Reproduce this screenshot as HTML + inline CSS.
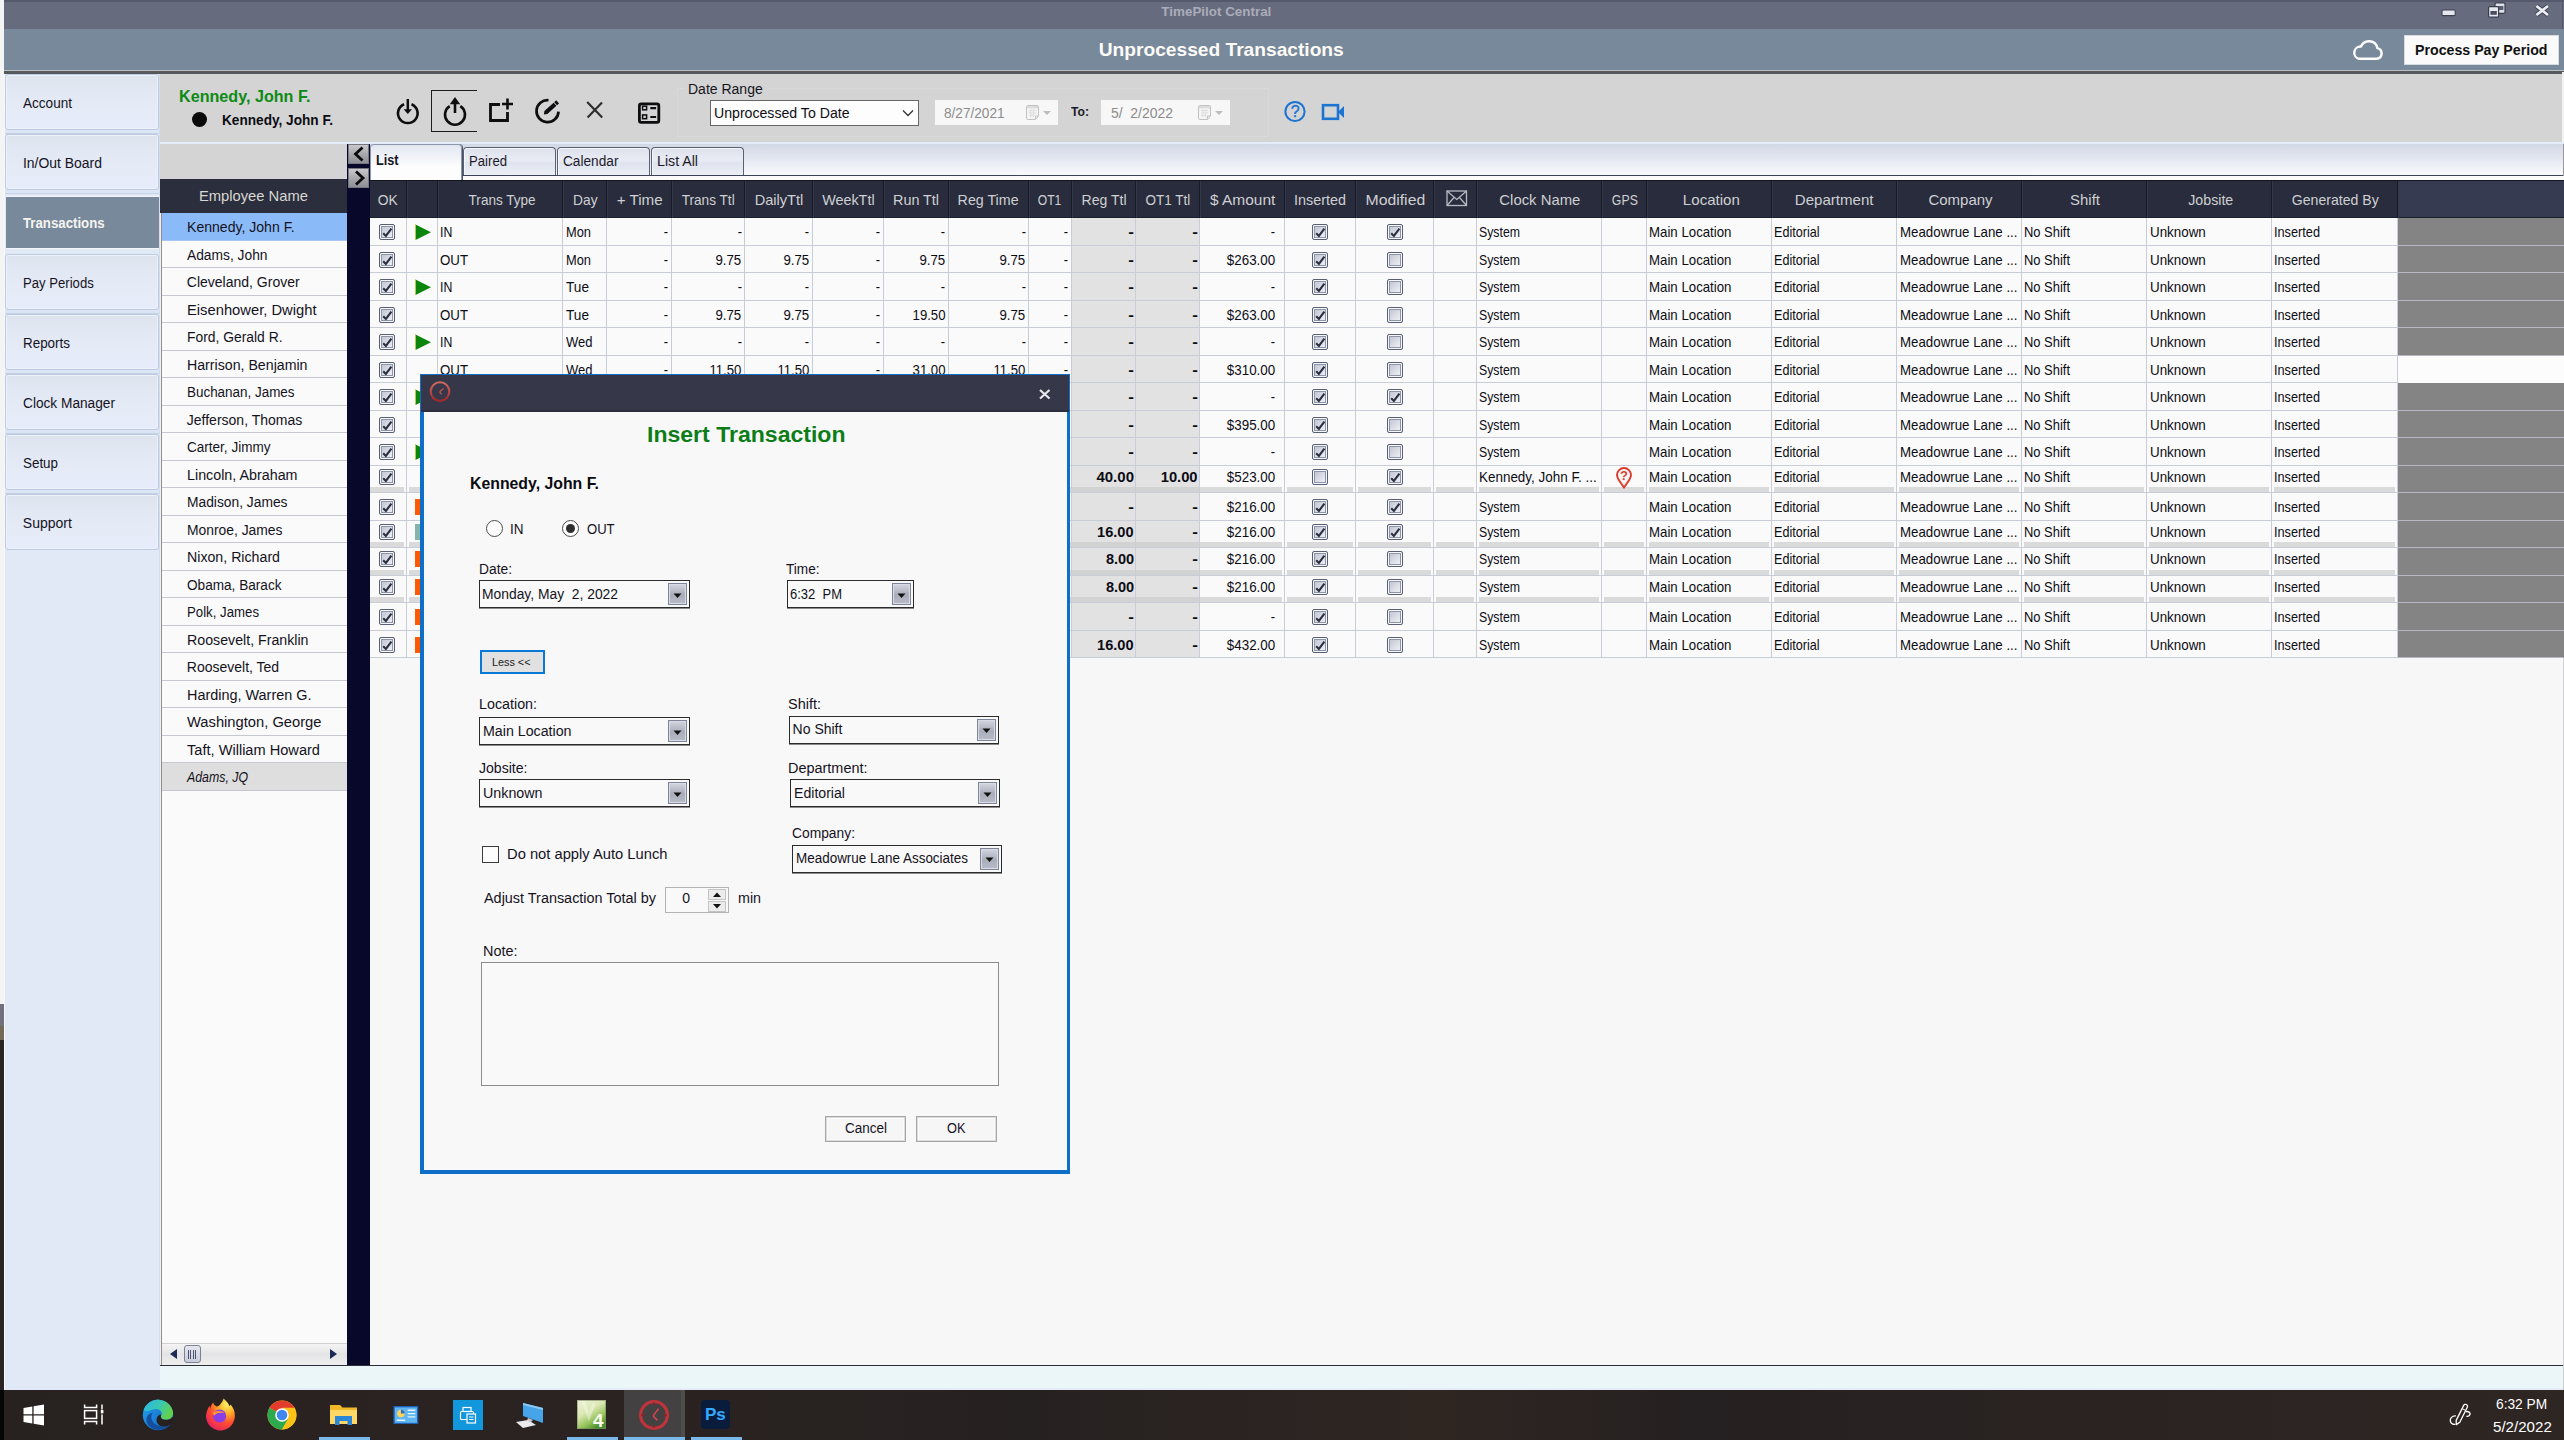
<!DOCTYPE html>
<html lang="en"><head><meta charset="utf-8"><title>TimePilot Central</title>
<style>
html,body{margin:0;padding:0;}
body{width:2564px;height:1440px;position:relative;overflow:hidden;background:#f7f7f7;
font-family:"Liberation Sans",sans-serif;}
.a{position:absolute;}
.t{position:absolute;white-space:nowrap;line-height:20px;height:20px;}
.t>span{display:inline-block;}
</style></head>
<body>
<section class="desktop-bg">
<div class="a" style="left:0px;top:0px;width:2564px;height:1440px;background:#f7f7f7;"></div>
<div class="a" style="left:0px;top:0px;width:4px;height:1004px;background:#f4f4f4;"></div>
<div class="a" style="left:0px;top:1004px;width:4px;height:22px;background:#70717f;"></div>
<div class="a" style="left:0px;top:1026px;width:4px;height:14px;background:#736a56;"></div>
<div class="a" style="left:0px;top:1040px;width:4px;height:350px;background:#2c2423;"></div>
<div class="a" style="left:4px;top:0px;width:1px;height:1390px;background:#f6f8fb;"></div>
</section><header class="window-titlebar">
<div class="a" style="left:4px;top:0px;width:2560px;height:29px;background:#676b7e;"></div>
<div class="a" style="left:4px;top:0px;width:2560px;height:1.5px;background:#56586c;"></div>
<div class="t" style="left:1163.16px;top:1.5px;font-size:13px;color:#aaadb9;font-weight:700;"><span style="transform:scaleX(1.0310);transform-origin:50% 50%;">TimePilot Central</span></div>
<svg class="a" style="left:2440px;top:8px;" width="18" height="10" viewBox="0 0 18 10"><rect x="2" y="2" width="13.2" height="5.6" rx="1.2" fill="#e6e7ee" stroke="#3e4052" stroke-width="1.1"/></svg>
<svg class="a" style="left:2486px;top:1px;" width="22" height="18" viewBox="0 0 22 18"><rect x="9" y="1.8" width="10" height="10.6" rx="1.2" fill="#dfe0e8" stroke="#3a3c4e" stroke-width="1.2"/><rect x="11" y="5" width="6.4" height="4" fill="#5a5c70"/><rect x="2.6" y="5.6" width="10" height="10.6" rx="1.2" fill="#e6e7ee" stroke="#3a3c4e" stroke-width="1.2"/><rect x="4.4" y="10" width="6.4" height="3.8" fill="#4a4c60"/></svg>
<svg class="a" style="left:2533px;top:3px;" width="19" height="15" viewBox="0 0 19 15"><path d="M3.4 3 L15 12 M15 3 L3.4 12" stroke="#3e4052" stroke-width="4.6" stroke-linecap="butt"/><path d="M3.4 3 L15 12 M15 3 L3.4 12" stroke="#ecedf2" stroke-width="2.8" stroke-linecap="butt"/></svg>
<div class="a" style="left:2562px;top:0px;width:1px;height:29px;background:#55576a;"></div>
</header><header class="page-header">
<div class="a" style="left:4px;top:29px;width:2560px;height:42px;background:#78899c;"></div>
<div class="t" style="left:1103.06px;top:39.59px;font-size:18.5px;color:#fdfbf6;font-weight:700;"><span style="transform:scaleX(1.0360);transform-origin:50% 50%;">Unprocessed Transactions</span></div>
<div class="a" style="left:4px;top:70px;width:2560px;height:1px;background:#b9c0c4;"></div>
<div class="a" style="left:4px;top:71px;width:2560px;height:3px;background:#55585c;"></div>
<svg class="a" style="left:2350px;top:37px;" width="36" height="26" viewBox="0 0 36 26"><path d="M9 21.8 H27 A5.4 5.4 0 0 0 27.4 11.2 A8.6 8.6 0 0 0 11 9.6 A6.2 6.2 0 0 0 9 21.8 Z" fill="none" stroke="#fff" stroke-width="2.4" stroke-linejoin="round"/></svg>
<div class="a" style="left:2404px;top:35px;width:155px;height:30px;background:#fafafa;border:1px solid #d9dcdf;box-sizing:border-box;"></div>
<div class="t" style="left:2414.6px;top:39.58px;font-size:14.5px;color:#111;font-weight:700;"><span style="transform:scaleX(0.9784);transform-origin:0 50%;">Process Pay Period</span></div>
</header><nav class="sidebar">
<div class="a" style="left:5px;top:74px;width:155px;height:1316px;background:#e0e9f5;"></div>
<div class="a" style="left:5px;top:74px;width:154px;height:56px;box-sizing:border-box;border:1px solid #bccbe2;border-radius:3px;background:linear-gradient(#dde4ee 0%,#e3e9f4 35%,#e6ecf9 100%);box-shadow:inset 0 0 0 1px #edf1fa;"></div>
<div class="a" style="left:5px;top:130px;width:154px;height:4px;background:#dbe5f4;border-bottom:1px solid #c4d2e6;box-sizing:border-box;"></div>
<div class="t" style="left:22.8px;top:92.65px;font-size:14px;color:#15121e;"><span style="transform:scaleX(0.9685);transform-origin:0 50%;">Account</span></div>
<div class="a" style="left:5px;top:134px;width:154px;height:56px;box-sizing:border-box;border:1px solid #bccbe2;border-radius:3px;background:linear-gradient(#dde4ee 0%,#e3e9f4 35%,#e6ecf9 100%);box-shadow:inset 0 0 0 1px #edf1fa;"></div>
<div class="a" style="left:5px;top:190px;width:154px;height:4px;background:#dbe5f4;border-bottom:1px solid #c4d2e6;box-sizing:border-box;"></div>
<div class="t" style="left:22.8px;top:152.65px;font-size:14px;color:#15121e;"><span style="transform:scaleX(0.9951);transform-origin:0 50%;">In/Out Board</span></div>
<div class="a" style="left:6px;top:196px;width:154px;height:51px;background:#78899c;border-top:1px solid #f4f6fb;border-bottom:1px solid #f4f6fb;"></div>
<div class="t" style="left:22.6px;top:212.55px;font-size:14px;color:#f6f4f0;font-weight:700;"><span style="transform:scaleX(0.9447);transform-origin:0 50%;">Transactions</span></div>
<div class="a" style="left:5px;top:254px;width:154px;height:56px;box-sizing:border-box;border:1px solid #bccbe2;border-radius:3px;background:linear-gradient(#dde4ee 0%,#e3e9f4 35%,#e6ecf9 100%);box-shadow:inset 0 0 0 1px #edf1fa;"></div>
<div class="a" style="left:5px;top:310px;width:154px;height:4px;background:#dbe5f4;border-bottom:1px solid #c4d2e6;box-sizing:border-box;"></div>
<div class="t" style="left:22.8px;top:272.65px;font-size:14px;color:#15121e;"><span style="transform:scaleX(0.9379);transform-origin:0 50%;">Pay Periods</span></div>
<div class="a" style="left:5px;top:314px;width:154px;height:56px;box-sizing:border-box;border:1px solid #bccbe2;border-radius:3px;background:linear-gradient(#dde4ee 0%,#e3e9f4 35%,#e6ecf9 100%);box-shadow:inset 0 0 0 1px #edf1fa;"></div>
<div class="a" style="left:5px;top:370px;width:154px;height:4px;background:#dbe5f4;border-bottom:1px solid #c4d2e6;box-sizing:border-box;"></div>
<div class="t" style="left:22.8px;top:332.65px;font-size:14px;color:#15121e;"><span style="transform:scaleX(0.9586);transform-origin:0 50%;">Reports</span></div>
<div class="a" style="left:5px;top:374px;width:154px;height:56px;box-sizing:border-box;border:1px solid #bccbe2;border-radius:3px;background:linear-gradient(#dde4ee 0%,#e3e9f4 35%,#e6ecf9 100%);box-shadow:inset 0 0 0 1px #edf1fa;"></div>
<div class="a" style="left:5px;top:430px;width:154px;height:4px;background:#dbe5f4;border-bottom:1px solid #c4d2e6;box-sizing:border-box;"></div>
<div class="t" style="left:22.8px;top:392.65px;font-size:14px;color:#15121e;"><span style="transform:scaleX(0.9771);transform-origin:0 50%;">Clock Manager</span></div>
<div class="a" style="left:5px;top:434px;width:154px;height:56px;box-sizing:border-box;border:1px solid #bccbe2;border-radius:3px;background:linear-gradient(#dde4ee 0%,#e3e9f4 35%,#e6ecf9 100%);box-shadow:inset 0 0 0 1px #edf1fa;"></div>
<div class="a" style="left:5px;top:490px;width:154px;height:4px;background:#dbe5f4;border-bottom:1px solid #c4d2e6;box-sizing:border-box;"></div>
<div class="t" style="left:22.8px;top:452.65px;font-size:14px;color:#15121e;"><span style="transform:scaleX(0.9564);transform-origin:0 50%;">Setup</span></div>
<div class="a" style="left:5px;top:494px;width:154px;height:56px;box-sizing:border-box;border:1px solid #bccbe2;border-radius:3px;background:linear-gradient(#dde4ee 0%,#e3e9f4 35%,#e6ecf9 100%);box-shadow:inset 0 0 0 1px #edf1fa;"></div>
<div class="t" style="left:22.8px;top:512.65px;font-size:14px;color:#15121e;"><span>Support</span></div>
<div class="a" style="left:159px;top:74px;width:1px;height:1316px;background:#d5ddea;"></div>
</nav>
<section class="toolbar">
<div class="a" style="left:160px;top:74px;width:2402px;height:68px;background:#d4d4d4;"></div>
<div class="a" style="left:2562px;top:72px;width:2px;height:72px;background:#f3f3f3;"></div>
<div class="t" style="left:179.3px;top:85.58px;font-size:16.5px;color:#0c8a14;font-weight:700;"><span style="transform:scaleX(0.9779);transform-origin:0 50%;">Kennedy, John F.</span></div>
<div class="a" style="left:192px;top:112px;width:15px;height:15px;background:#0a0a0a;border-radius:50%;"></div>
<div class="t" style="left:221.5px;top:110.45px;font-size:14px;color:#0b0b12;font-weight:700;"><span style="transform:scaleX(0.9729);transform-origin:0 50%;">Kennedy, John F.</span></div>
<svg class="a" style="left:394px;top:97px;" width="28" height="30" viewBox="0 0 28 30"><path d="M10.1 7.2 A9.8 9.8 0 1 0 17.5 7.2" fill="none" stroke="#0e0e10" stroke-width="2.6"/><path d="M13.8 2 V13" stroke="#0e0e10" stroke-width="2.5"/><path d="M9.6 12.2 H18 L13.8 17 Z" fill="#0e0e10"/></svg>
<div class="a" style="left:431px;top:90px;width:46px;height:42px;border:1px solid #1d1d1d;border-right:none;box-sizing:border-box;"></div>
<svg class="a" style="left:441px;top:95px;" width="28" height="32" viewBox="0 0 28 32"><path d="M8.7 11.2 A10 10 0 1 0 19.3 11.2" fill="none" stroke="#0e0e10" stroke-width="2.6"/><path d="M14 7 V18" stroke="#0e0e10" stroke-width="2.6"/><path d="M8.8 9.3 H19.2 L14 2 Z" fill="#0e0e10"/></svg>
<svg class="a" style="left:487px;top:96px;" width="28" height="28" viewBox="0 0 28 28"><path d="M13 8.5 H3.5 V24.5 H20.5 V16" fill="none" stroke="#0e0e10" stroke-width="2.8"/><path d="M20.5 2.5 V13.5 M15 8 H26" stroke="#0e0e10" stroke-width="2.6"/></svg>
<svg class="a" style="left:533px;top:96px;" width="30" height="30" viewBox="0 0 30 30"><path d="M15.5 4.25 A11 11 0 1 0 25.5 15.6" fill="none" stroke="#0e0e10" stroke-width="2.7"/><path d="M10.9 18.6 L11.4 14.9 L20.62 6.67 L23.45 9.77 L14.4 18.1 Z" fill="#0e0e10"/><path d="M21.21 6.14 L23.21 4.31 L26.04 7.42 L24.04 9.24 Z" fill="#0e0e10"/></svg>
<svg class="a" style="left:585px;top:100px;" width="20" height="20" viewBox="0 0 20 20"><path d="M2.2 2 L17.2 17.6 M17 2.6 L2.6 17.4" stroke="#2c2c2c" stroke-width="2.1"/></svg>
<svg class="a" style="left:636px;top:100px;" width="26" height="26" viewBox="0 0 26 26"><rect x="3.4" y="3.9" width="19.4" height="18.5" rx="1.8" fill="none" stroke="#0e0e10" stroke-width="2.8"/><rect x="6.6" y="6.2" width="4" height="3.6" fill="none" stroke="#0e0e10" stroke-width="1.5"/><rect x="6.6" y="14.9" width="4" height="3.8" fill="none" stroke="#0e0e10" stroke-width="1.5"/><path d="M14.3 8.2 H20.1 M14.3 17 H20.1" stroke="#0e0e10" stroke-width="2.2"/></svg>
<div class="a" style="left:677px;top:88px;width:592px;height:49px;border:1px solid #d9d9d9;box-sizing:border-box;"></div>
<div class="a" style="left:685px;top:82px;width:82px;height:14px;background:#d4d4d4;"></div>
<div class="t" style="left:688px;top:79.35px;font-size:14px;color:#15151c;"><span>Date Range</span></div>
<div class="a" style="left:710px;top:100px;width:209px;height:26px;background:#fdfdfd;border:1px solid #666;box-sizing:border-box;"></div>
<div class="t" style="left:714.2px;top:102.75px;font-size:14px;color:#0d0d14;"><span style="transform:scaleX(1.0084);transform-origin:0 50%;">Unprocessed To Date</span></div>
<svg class="a" style="left:901px;top:109px;" width="14" height="9" viewBox="0 0 14 9"><path d="M2 1.5 L7 6.5 L12 1.5" fill="none" stroke="#333" stroke-width="1.3"/></svg>
<div class="a" style="left:935px;top:100px;width:123px;height:25px;background:#f7f7f7;"></div>
<div class="t" style="left:944.4px;top:102.75px;font-size:14px;color:#8c8c8c;"><span style="transform:scaleX(0.9728);transform-origin:0 50%;">8/27/2021</span></div>
<svg class="a" style="left:1026px;top:105px;" width="13" height="15" viewBox="0 0 13 15"><path d="M0.5 1.5 Q0.5 0.5 1.5 0.5 H11.5 Q12.5 0.5 12.5 1.5 V11 L9.5 14.5 H1.5 Q0.5 14.5 0.5 13.5 Z" fill="#f4f4f4" stroke="#c2c2c2"/><path d="M1 1 H12 V3.4 H1 Z" fill="#dcdcdc"/><path d="M3 5.5 H10 M3 8 H10 M3 10.5 H8.5 M4.8 4.5 V12 M7.4 4.5 V12" stroke="#dedede" stroke-width="1"/><path d="M9.5 14.5 V11 H12.5" fill="none" stroke="#c2c2c2"/></svg>
<svg class="a" style="left:1041.5px;top:109.5px;" width="10" height="6" viewBox="0 0 10 6"><path d="M1 1 H9 L5 5 Z" fill="#bdbdbd"/></svg>
<div class="t" style="left:1070.5px;top:102.32px;font-size:13.5px;color:#1a1a22;font-weight:700;"><span style="transform:scaleX(0.9000);transform-origin:0 50%;">To:</span></div>
<div class="a" style="left:1101px;top:100px;width:129px;height:25px;background:#f7f7f7;"></div>
<div class="t" style="left:1110.6px;top:102.75px;font-size:14px;color:#8c8c8c;"><span style="transform:scaleX(0.9955);transform-origin:0 50%;">5/ &nbsp;2/2022</span></div>
<svg class="a" style="left:1198px;top:105px;" width="13" height="15" viewBox="0 0 13 15"><path d="M0.5 1.5 Q0.5 0.5 1.5 0.5 H11.5 Q12.5 0.5 12.5 1.5 V11 L9.5 14.5 H1.5 Q0.5 14.5 0.5 13.5 Z" fill="#f4f4f4" stroke="#c2c2c2"/><path d="M1 1 H12 V3.4 H1 Z" fill="#dcdcdc"/><path d="M3 5.5 H10 M3 8 H10 M3 10.5 H8.5 M4.8 4.5 V12 M7.4 4.5 V12" stroke="#dedede" stroke-width="1"/><path d="M9.5 14.5 V11 H12.5" fill="none" stroke="#c2c2c2"/></svg>
<svg class="a" style="left:1213.5px;top:109.5px;" width="10" height="6" viewBox="0 0 10 6"><path d="M1 1 H9 L5 5 Z" fill="#bdbdbd"/></svg>
<svg class="a" style="left:1283px;top:100px;" width="24" height="24" viewBox="0 0 24 24"><circle cx="12" cy="11.5" r="9.6" fill="none" stroke="#1b74d2" stroke-width="2"/></svg>
<div class="t" style="left:1290.75px;top:101.66px;font-size:16px;color:#1b74d2;-webkit-text-stroke:0.4px #1b74d2;"><span>?</span></div>
<svg class="a" style="left:1320px;top:102px;" width="26" height="20" viewBox="0 0 26 20"><rect x="3" y="3.2" width="15" height="13.6" fill="none" stroke="#1b74d2" stroke-width="2.6"/><path d="M18 10 L24 4 V16 Z" fill="#1b74d2"/></svg>
</section><section class="tabstrip">
<div class="a" style="left:160px;top:142px;width:2404px;height:2px;background:#e4ecf8;"></div>
<div class="a" style="left:160px;top:144px;width:188px;height:35px;background:#d4d4d4;"></div>
<div class="a" style="left:348px;top:144px;width:2215px;height:32px;background:linear-gradient(#d3d8e6 0%,#e1e5ef 40%,#f4f6fa 85%,#fbfbfc 100%);"></div>
<div class="a" style="left:348px;top:175px;width:2216px;height:1px;background:#3c4456;"></div>
<div class="a" style="left:2563px;top:144px;width:1px;height:32px;background:#9a9a9e;"></div>
<div class="a" style="left:370px;top:176px;width:2194px;height:5px;background:#fbfbfb;"></div>
<div class="a" style="left:370px;top:144px;width:92px;height:37px;box-sizing:border-box;border:1px solid #8d97ab;border-bottom:none;border-radius:4px 4px 0 0;background:linear-gradient(#e3e7f1 0%,#f1f3f8 35%,#fdfdfd 60%,#fdfdfd 100%);box-shadow:1px 0 0 #4a5263;"></div>
<div class="t" style="left:375.8px;top:150.35px;font-size:14px;color:#15151f;font-weight:700;"><span style="transform:scaleX(0.9040);transform-origin:0 50%;">List</span></div>
<div class="a" style="left:463px;top:147px;width:93px;height:28px;box-sizing:border-box;border:1px solid #596274;border-bottom:none;border-radius:4px 4px 0 0;background:linear-gradient(#dde1ec 0%,#e9ecf4 45%,#dfe3ee 55%,#eceff5 100%);box-shadow:inset 1px 1px 0 #f4f6fa;"></div>
<div class="t" style="left:469.4px;top:151.35px;font-size:14px;color:#1c1a2a;"><span style="transform:scaleX(0.9390);transform-origin:0 50%;">Paired</span></div>
<div class="a" style="left:557px;top:147px;width:93px;height:28px;box-sizing:border-box;border:1px solid #596274;border-bottom:none;border-radius:4px 4px 0 0;background:linear-gradient(#dde1ec 0%,#e9ecf4 45%,#dfe3ee 55%,#eceff5 100%);box-shadow:inset 1px 1px 0 #f4f6fa;"></div>
<div class="t" style="left:563.4px;top:151.35px;font-size:14px;color:#1c1a2a;"><span style="transform:scaleX(0.9766);transform-origin:0 50%;">Calendar</span></div>
<div class="a" style="left:651px;top:147px;width:93px;height:28px;box-sizing:border-box;border:1px solid #596274;border-bottom:none;border-radius:4px 4px 0 0;background:linear-gradient(#dde1ec 0%,#e9ecf4 45%,#dfe3ee 55%,#eceff5 100%);box-shadow:inset 1px 1px 0 #f4f6fa;"></div>
<div class="t" style="left:657.4px;top:151.35px;font-size:14px;color:#1c1a2a;"><span style="transform:scaleX(1.0131);transform-origin:0 50%;">List All</span></div>
</section><section class="splitter">
<div class="a" style="left:347px;top:144px;width:23px;height:1221px;background:#08082a;"></div>
<div class="a" style="left:348px;top:144px;width:21px;height:20px;background:linear-gradient(#c9c9cd,#a2a2a8 60%,#8e8e96);border:1px solid #77777f;box-sizing:border-box;"></div>
<svg class="a" style="left:348px;top:144px;" width="21" height="20" viewBox="0 0 21 20"><path d="M14.5 3.5 L7.5 10 L14.5 16.5" fill="none" stroke="#0a0a0a" stroke-width="2.8"/></svg>
<div class="a" style="left:348px;top:168px;width:21px;height:20px;background:linear-gradient(#c9c9cd,#a2a2a8 60%,#8e8e96);border:1px solid #77777f;box-sizing:border-box;"></div>
<svg class="a" style="left:348px;top:168px;" width="21" height="20" viewBox="0 0 21 20"><path d="M8 3.5 L15 10 L8 16.5" fill="none" stroke="#0a0a0a" stroke-width="2.8"/></svg>
</section><section class="employee-list">
<div class="a" style="left:160px;top:179px;width:187px;height:1186px;background:#fafafa;border-left:1px solid #f0f0f0;box-sizing:border-box;"></div>
<div class="a" style="left:161px;top:213px;width:1px;height:1152px;background:#8e8e90;"></div>
<div class="a" style="left:160px;top:179px;width:187px;height:34px;background:#2a2e3d;"></div>
<div class="t" style="left:197.95px;top:186.4px;font-size:15px;color:#d9d7d2;"><span style="transform:scaleX(0.9830);transform-origin:50% 50%;">Employee Name</span></div>
<div class="a" style="left:162px;top:213px;width:185px;height:27px;background:#8bbaf8;"></div>
<div class="a" style="left:162px;top:240px;width:185px;height:1px;background:#a9c6ee;"></div>
<div class="t" style="left:186.8px;top:216.75px;font-size:14px;color:#14121c;"><span style="transform:scaleX(1.0041);transform-origin:0 50%;">Kennedy, John F.</span></div>
<div class="a" style="left:162px;top:267px;width:185px;height:1px;background:#c6c8d0;"></div>
<div class="t" style="left:186.8px;top:244.75px;font-size:14px;color:#14121c;"><span style="transform:scaleX(0.9851);transform-origin:0 50%;">Adams, John</span></div>
<div class="a" style="left:162px;top:295px;width:185px;height:1px;background:#c6c8d0;"></div>
<div class="t" style="left:186.8px;top:271.75px;font-size:14px;color:#14121c;"><span>Cleveland, Grover</span></div>
<div class="a" style="left:162px;top:322px;width:185px;height:1px;background:#c6c8d0;"></div>
<div class="t" style="left:186.8px;top:299.75px;font-size:14px;color:#14121c;"><span style="transform:scaleX(1.0532);transform-origin:0 50%;">Eisenhower, Dwight</span></div>
<div class="a" style="left:162px;top:350px;width:185px;height:1px;background:#c6c8d0;"></div>
<div class="t" style="left:186.8px;top:326.75px;font-size:14px;color:#14121c;"><span style="transform:scaleX(0.9898);transform-origin:0 50%;">Ford, Gerald R.</span></div>
<div class="a" style="left:162px;top:377px;width:185px;height:1px;background:#c6c8d0;"></div>
<div class="t" style="left:186.8px;top:354.75px;font-size:14px;color:#14121c;"><span style="transform:scaleX(1.0121);transform-origin:0 50%;">Harrison, Benjamin</span></div>
<div class="a" style="left:162px;top:405px;width:185px;height:1px;background:#c6c8d0;"></div>
<div class="t" style="left:186.8px;top:381.75px;font-size:14px;color:#14121c;"><span style="transform:scaleX(0.9592);transform-origin:0 50%;">Buchanan, James</span></div>
<div class="a" style="left:162px;top:432px;width:185px;height:1px;background:#c6c8d0;"></div>
<div class="t" style="left:186.8px;top:409.75px;font-size:14px;color:#14121c;"><span>Jefferson, Thomas</span></div>
<div class="a" style="left:162px;top:460px;width:185px;height:1px;background:#c6c8d0;"></div>
<div class="t" style="left:186.8px;top:436.75px;font-size:14px;color:#14121c;"><span style="transform:scaleX(0.9671);transform-origin:0 50%;">Carter, Jimmy</span></div>
<div class="a" style="left:162px;top:487px;width:185px;height:1px;background:#c6c8d0;"></div>
<div class="t" style="left:186.8px;top:464.75px;font-size:14px;color:#14121c;"><span style="transform:scaleX(1.0214);transform-origin:0 50%;">Lincoln, Abraham</span></div>
<div class="a" style="left:162px;top:515px;width:185px;height:1px;background:#c6c8d0;"></div>
<div class="t" style="left:186.8px;top:491.75px;font-size:14px;color:#14121c;"><span style="transform:scaleX(0.9859);transform-origin:0 50%;">Madison, James</span></div>
<div class="a" style="left:162px;top:542px;width:185px;height:1px;background:#c6c8d0;"></div>
<div class="t" style="left:186.8px;top:519.75px;font-size:14px;color:#14121c;"><span style="transform:scaleX(0.9898);transform-origin:0 50%;">Monroe, James</span></div>
<div class="a" style="left:162px;top:570px;width:185px;height:1px;background:#c6c8d0;"></div>
<div class="t" style="left:186.8px;top:546.75px;font-size:14px;color:#14121c;"><span style="transform:scaleX(1.0128);transform-origin:0 50%;">Nixon, Richard</span></div>
<div class="a" style="left:162px;top:597px;width:185px;height:1px;background:#c6c8d0;"></div>
<div class="t" style="left:186.8px;top:574.75px;font-size:14px;color:#14121c;"><span style="transform:scaleX(0.9716);transform-origin:0 50%;">Obama, Barack</span></div>
<div class="a" style="left:162px;top:625px;width:185px;height:1px;background:#c6c8d0;"></div>
<div class="t" style="left:186.8px;top:601.75px;font-size:14px;color:#14121c;"><span style="transform:scaleX(0.9443);transform-origin:0 50%;">Polk, James</span></div>
<div class="a" style="left:162px;top:652px;width:185px;height:1px;background:#c6c8d0;"></div>
<div class="t" style="left:186.8px;top:629.75px;font-size:14px;color:#14121c;"><span style="transform:scaleX(1.0140);transform-origin:0 50%;">Roosevelt, Franklin</span></div>
<div class="a" style="left:162px;top:680px;width:185px;height:1px;background:#c6c8d0;"></div>
<div class="t" style="left:186.8px;top:656.75px;font-size:14px;color:#14121c;"><span>Roosevelt, Ted</span></div>
<div class="a" style="left:162px;top:707px;width:185px;height:1px;background:#c6c8d0;"></div>
<div class="t" style="left:186.8px;top:684.75px;font-size:14px;color:#14121c;"><span style="transform:scaleX(1.0301);transform-origin:0 50%;">Harding, Warren G.</span></div>
<div class="a" style="left:162px;top:735px;width:185px;height:1px;background:#c6c8d0;"></div>
<div class="t" style="left:186.8px;top:711.75px;font-size:14px;color:#14121c;"><span style="transform:scaleX(1.0517);transform-origin:0 50%;">Washington, George</span></div>
<div class="a" style="left:162px;top:762px;width:185px;height:1px;background:#c6c8d0;"></div>
<div class="t" style="left:186.8px;top:739.75px;font-size:14px;color:#14121c;"><span style="transform:scaleX(1.0424);transform-origin:0 50%;">Taft, William Howard</span></div>
<div class="a" style="left:162px;top:763px;width:185px;height:27px;background:#dedede;"></div>
<div class="a" style="left:162px;top:790px;width:185px;height:1px;background:#c6c8d0;"></div>
<div class="t" style="left:186.8px;top:766.75px;font-size:14px;color:#14121c;font-style:italic;"><span style="transform:scaleX(0.8809);transform-origin:0 50%;">Adams, JQ</span></div>
<div class="a" style="left:162px;top:1343px;width:185px;height:22px;background:linear-gradient(#f4f4f4,#e4e4e6 50%,#eeeeef);border-top:1px solid #d0d0d4;box-sizing:border-box;"></div>
<svg class="a" style="left:168px;top:1348px;" width="10" height="12" viewBox="0 0 10 12"><path d="M9 1 V11 L2 6 Z" fill="#1c2a55"/></svg>
<svg class="a" style="left:329px;top:1348px;" width="10" height="12" viewBox="0 0 10 12"><path d="M1 1 V11 L8 6 Z" fill="#1c2a55"/></svg>
<div class="a" style="left:184px;top:1345px;width:17px;height:18px;background:linear-gradient(#e6e8f0,#c9ccd8);border:1px solid #7b8196;border-radius:3px;box-sizing:border-box;"></div>
<div class="a" style="left:188.0px;top:1350px;width:1px;height:9px;background:#4c5270;"></div>
<div class="a" style="left:190.4px;top:1350px;width:1px;height:9px;background:#4c5270;"></div>
<div class="a" style="left:192.8px;top:1350px;width:1px;height:9px;background:#4c5270;"></div>
<div class="a" style="left:195.2px;top:1350px;width:1px;height:9px;background:#4c5270;"></div>
</section>
<section class="grid">
<div class="a" style="left:370px;top:181px;width:2194px;height:1184px;background:#f7f7f7;"></div>
<div class="a" style="left:370px;top:1365px;width:2194px;height:1px;background:#2a2d3a;"></div>
<div class="a" style="left:160px;top:1365px;width:210px;height:1px;background:#2a2d3a;"></div>
<div class="a" style="left:370px;top:180px;width:2028px;height:38px;background:#282c3c;"></div>
<div class="a" style="left:2398px;top:180px;width:166px;height:38px;background:#373b52;"></div>
<div class="a" style="left:370px;top:180px;width:2194px;height:1px;background:#14161f;"></div>
<div class="a" style="left:370px;top:217px;width:2194px;height:1px;background:#1b1e2b;"></div>
<div class="a" style="left:406px;top:181px;width:1px;height:37px;background:#171a26;"></div>
<div class="a" style="left:407px;top:181px;width:1px;height:37px;background:#333849;"></div>
<div class="t" style="left:377.16px;top:190px;font-size:15px;color:#cfd0d3;"><span style="transform:scaleX(0.9222);transform-origin:50% 50%;">OK</span></div>
<div class="a" style="left:437px;top:181px;width:1px;height:37px;background:#171a26;"></div>
<div class="a" style="left:438px;top:181px;width:1px;height:37px;background:#333849;"></div>
<div class="a" style="left:562px;top:181px;width:1px;height:37px;background:#171a26;"></div>
<div class="a" style="left:563px;top:181px;width:1px;height:37px;background:#333849;"></div>
<div class="t" style="left:465.1px;top:190px;font-size:15px;color:#cfd0d3;"><span style="transform:scaleX(0.9029);transform-origin:50% 50%;">Trans Type</span></div>
<div class="a" style="left:606px;top:181px;width:1px;height:37px;background:#171a26;"></div>
<div class="a" style="left:607px;top:181px;width:1px;height:37px;background:#333849;"></div>
<div class="t" style="left:571.86px;top:190px;font-size:15px;color:#cfd0d3;"><span style="transform:scaleX(0.9180);transform-origin:50% 50%;">Day</span></div>
<div class="a" style="left:671px;top:181px;width:1px;height:37px;background:#171a26;"></div>
<div class="a" style="left:672px;top:181px;width:1px;height:37px;background:#333849;"></div>
<div class="t" style="left:617.28px;top:190px;font-size:15px;color:#cfd0d3;"><span style="transform:scaleX(1.0124);transform-origin:50% 50%;">+ Time</span></div>
<div class="a" style="left:744px;top:181px;width:1px;height:37px;background:#171a26;"></div>
<div class="a" style="left:745px;top:181px;width:1px;height:37px;background:#333849;"></div>
<div class="t" style="left:679.32px;top:190px;font-size:15px;color:#cfd0d3;"><span style="transform:scaleX(0.9082);transform-origin:50% 50%;">Trans Ttl</span></div>
<div class="a" style="left:812px;top:181px;width:1px;height:37px;background:#171a26;"></div>
<div class="a" style="left:813px;top:181px;width:1px;height:37px;background:#333849;"></div>
<div class="t" style="left:753.69px;top:190px;font-size:15px;color:#cfd0d3;"><span style="transform:scaleX(0.9737);transform-origin:50% 50%;">DailyTtl</span></div>
<div class="a" style="left:883px;top:181px;width:1px;height:37px;background:#171a26;"></div>
<div class="a" style="left:884px;top:181px;width:1px;height:37px;background:#333849;"></div>
<div class="t" style="left:820.63px;top:190px;font-size:15px;color:#cfd0d3;"><span style="transform:scaleX(0.9574);transform-origin:50% 50%;">WeekTtl</span></div>
<div class="a" style="left:948px;top:181px;width:1px;height:37px;background:#171a26;"></div>
<div class="a" style="left:949px;top:181px;width:1px;height:37px;background:#333849;"></div>
<div class="t" style="left:891.96px;top:190px;font-size:15px;color:#cfd0d3;"><span style="transform:scaleX(0.9568);transform-origin:50% 50%;">Run Ttl</span></div>
<div class="a" style="left:1028px;top:181px;width:1px;height:37px;background:#171a26;"></div>
<div class="a" style="left:1029px;top:181px;width:1px;height:37px;background:#333849;"></div>
<div class="t" style="left:956.4px;top:190px;font-size:15px;color:#cfd0d3;"><span style="transform:scaleX(0.9501);transform-origin:50% 50%;">Reg Time</span></div>
<div class="a" style="left:1071px;top:181px;width:1px;height:37px;background:#171a26;"></div>
<div class="a" style="left:1072px;top:181px;width:1px;height:37px;background:#333849;"></div>
<div class="t" style="left:1035.41px;top:190px;font-size:15px;color:#cfd0d3;"><span style="transform:scaleX(0.8051);transform-origin:50% 50%;">OT1</span></div>
<div class="a" style="left:1135px;top:181px;width:1px;height:37px;background:#171a26;"></div>
<div class="a" style="left:1136px;top:181px;width:1px;height:37px;background:#333849;"></div>
<div class="t" style="left:1079.96px;top:190px;font-size:15px;color:#cfd0d3;"><span style="transform:scaleX(0.9360);transform-origin:50% 50%;">Reg Ttl</span></div>
<div class="a" style="left:1199px;top:181px;width:1px;height:37px;background:#171a26;"></div>
<div class="a" style="left:1200px;top:181px;width:1px;height:37px;background:#333849;"></div>
<div class="t" style="left:1143.13px;top:190px;font-size:15px;color:#cfd0d3;"><span style="transform:scaleX(0.8988);transform-origin:50% 50%;">OT1 Ttl</span></div>
<div class="a" style="left:1284px;top:181px;width:1px;height:37px;background:#171a26;"></div>
<div class="a" style="left:1285px;top:181px;width:1px;height:37px;background:#333849;"></div>
<div class="t" style="left:1210.7px;top:190px;font-size:15px;color:#cfd0d3;"><span style="transform:scaleX(1.0317);transform-origin:50% 50%;">$ Amount</span></div>
<div class="a" style="left:1355px;top:181px;width:1px;height:37px;background:#171a26;"></div>
<div class="a" style="left:1356px;top:181px;width:1px;height:37px;background:#333849;"></div>
<div class="t" style="left:1292.9px;top:190px;font-size:15px;color:#cfd0d3;"><span style="transform:scaleX(0.9594);transform-origin:50% 50%;">Inserted</span></div>
<div class="a" style="left:1433px;top:181px;width:1px;height:37px;background:#171a26;"></div>
<div class="a" style="left:1434px;top:181px;width:1px;height:37px;background:#333849;"></div>
<div class="t" style="left:1366.95px;top:190px;font-size:15px;color:#cfd0d3;"><span style="transform:scaleX(1.0529);transform-origin:50% 50%;">Modified</span></div>
<div class="a" style="left:1476px;top:181px;width:1px;height:37px;background:#171a26;"></div>
<div class="a" style="left:1477px;top:181px;width:1px;height:37px;background:#333849;"></div>
<div class="a" style="left:1601px;top:181px;width:1px;height:37px;background:#171a26;"></div>
<div class="a" style="left:1602px;top:181px;width:1px;height:37px;background:#333849;"></div>
<div class="t" style="left:1499.16px;top:190px;font-size:15px;color:#cfd0d3;"><span style="transform:scaleX(0.9916);transform-origin:50% 50%;">Clock Name</span></div>
<div class="a" style="left:1646px;top:181px;width:1px;height:37px;background:#171a26;"></div>
<div class="a" style="left:1647px;top:181px;width:1px;height:37px;background:#333849;"></div>
<div class="t" style="left:1609.16px;top:190px;font-size:15px;color:#cfd0d3;"><span style="transform:scaleX(0.8205);transform-origin:50% 50%;">GPS</span></div>
<div class="a" style="left:1771px;top:181px;width:1px;height:37px;background:#171a26;"></div>
<div class="a" style="left:1772px;top:181px;width:1px;height:37px;background:#333849;"></div>
<div class="t" style="left:1682.64px;top:190px;font-size:15px;color:#cfd0d3;"><span style="transform:scaleX(1.0050);transform-origin:50% 50%;">Location</span></div>
<div class="a" style="left:1896px;top:181px;width:1px;height:37px;background:#171a26;"></div>
<div class="a" style="left:1897px;top:181px;width:1px;height:37px;background:#333849;"></div>
<div class="t" style="left:1795.31px;top:190px;font-size:15px;color:#cfd0d3;"><span style="transform:scaleX(1.0041);transform-origin:50% 50%;">Department</span></div>
<div class="a" style="left:2021px;top:181px;width:1px;height:37px;background:#171a26;"></div>
<div class="a" style="left:2022px;top:181px;width:1px;height:37px;background:#333849;"></div>
<div class="t" style="left:1928.4px;top:190px;font-size:15px;color:#cfd0d3;"><span>Company</span></div>
<div class="a" style="left:2146px;top:181px;width:1px;height:37px;background:#171a26;"></div>
<div class="a" style="left:2147px;top:181px;width:1px;height:37px;background:#333849;"></div>
<div class="t" style="left:2070.29px;top:190px;font-size:15px;color:#cfd0d3;"><span style="transform:scaleX(0.9928);transform-origin:50% 50%;">Shift</span></div>
<div class="a" style="left:2271px;top:181px;width:1px;height:37px;background:#171a26;"></div>
<div class="a" style="left:2272px;top:181px;width:1px;height:37px;background:#333849;"></div>
<div class="t" style="left:2186.73px;top:190px;font-size:15px;color:#cfd0d3;"><span style="transform:scaleX(0.9467);transform-origin:50% 50%;">Jobsite</span></div>
<div class="a" style="left:2397px;top:181px;width:1px;height:37px;background:#171a26;"></div>
<div class="a" style="left:2398px;top:181px;width:1px;height:37px;background:#333849;"></div>
<div class="t" style="left:2289.42px;top:190px;font-size:15px;color:#cfd0d3;"><span style="transform:scaleX(0.9399);transform-origin:50% 50%;">Generated By</span></div>
<svg class="a" style="left:1446px;top:190px;" width="22" height="17" viewBox="0 0 22 17"><rect x="1" y="1" width="19.5" height="14.5" fill="none" stroke="#b9bcc4" stroke-width="1.3"/><path d="M1 1 L10.8 9.5 L20.5 1 M1 15.5 L8 7.5 M20.5 15.5 L13.5 7.5" fill="none" stroke="#b9bcc4" stroke-width="1.2"/></svg>
<div class="a" style="left:370px;top:218px;width:2028px;height:27px;background:#fafafa;"></div>
<div class="a" style="left:1072px;top:218px;width:63px;height:27px;background:#e2e2e2;"></div>
<div class="a" style="left:1136px;top:218px;width:63px;height:27px;background:#e2e2e2;"></div>
<div class="a" style="left:2398px;top:218px;width:166px;height:27px;background:#848484;"></div>
<div class="a" style="left:2398px;top:245px;width:166px;height:1px;background:#b4b7c2;"></div>
<div class="a" style="left:370px;top:245px;width:2028px;height:1px;background:#c9cdd8;"></div>
<div class="a" style="left:379px;top:224px;width:16px;height:16px;box-sizing:border-box;border:1px solid #596073;border-radius:2px;box-shadow:inset 0 0 0 1px #f6f7fa,inset 0 0 0 2px #8f95a8;background:linear-gradient(135deg,#c9ccd9 25%,#e9eaf0 75%);"><svg width="14" height="14" viewBox="0 0 14 14" style="position:absolute;left:0;top:0"><path d="M3.2 8.2 L5.9 10.9 L11.4 3.6" fill="none" stroke="#2a2f42" stroke-width="2.1"/></svg></div>
<svg class="a" style="left:414px;top:224px;" width="18" height="17" viewBox="0 0 18 17"><path d="M1.5 0.5 L17 8.3 L1.5 16 Z" fill="#0c850c"/><path d="M1.5 0.5 V16" stroke="#b9c850" stroke-width="1"/></svg>
<div class="t" style="left:440.3px;top:222.1px;font-size:15px;color:#0c0c14;"><span style="transform:scaleX(0.8200);transform-origin:0 50%;">IN</span></div>
<div class="t" style="left:566px;top:222.1px;font-size:15px;color:#0c0c14;"><span style="transform:scaleX(0.8565);transform-origin:0 50%;">Mon</span></div>
<div class="t" style="left:663.3px;top:222.1px;font-size:15px;color:#0c0c14;"><span style="transform:scaleX(0.8600);transform-origin:100% 50%;">-</span></div>
<div class="t" style="left:736.5px;top:222.1px;font-size:15px;color:#0c0c14;"><span style="transform:scaleX(0.8600);transform-origin:100% 50%;">-</span></div>
<div class="t" style="left:804px;top:222.1px;font-size:15px;color:#0c0c14;"><span style="transform:scaleX(0.8600);transform-origin:100% 50%;">-</span></div>
<div class="t" style="left:875px;top:222.1px;font-size:15px;color:#0c0c14;"><span style="transform:scaleX(0.8600);transform-origin:100% 50%;">-</span></div>
<div class="t" style="left:940.4px;top:222.1px;font-size:15px;color:#0c0c14;"><span style="transform:scaleX(0.8600);transform-origin:100% 50%;">-</span></div>
<div class="t" style="left:1020.6px;top:222.1px;font-size:15px;color:#0c0c14;"><span style="transform:scaleX(0.8600);transform-origin:100% 50%;">-</span></div>
<div class="t" style="left:1063px;top:222.1px;font-size:15px;color:#0c0c14;"><span style="transform:scaleX(0.8600);transform-origin:100% 50%;">-</span></div>
<div class="t" style="left:1270px;top:222.1px;font-size:15px;color:#0c0c14;"><span style="transform:scaleX(0.8600);transform-origin:100% 50%;">-</span></div>
<div class="t" style="left:1129px;top:222.1px;font-size:15px;color:#0c0c14;font-weight:700;"><span style="transform:scaleX(1.1400);transform-origin:100% 50%;">-</span></div>
<div class="t" style="left:1192.8px;top:222.1px;font-size:15px;color:#0c0c14;font-weight:700;"><span style="transform:scaleX(1.1400);transform-origin:100% 50%;">-</span></div>
<div class="a" style="left:1312px;top:224px;width:16px;height:16px;box-sizing:border-box;border:1px solid #596073;border-radius:2px;box-shadow:inset 0 0 0 1px #f6f7fa,inset 0 0 0 2px #8f95a8;background:linear-gradient(135deg,#c9ccd9 25%,#e9eaf0 75%);"><svg width="14" height="14" viewBox="0 0 14 14" style="position:absolute;left:0;top:0"><path d="M3.2 8.2 L5.9 10.9 L11.4 3.6" fill="none" stroke="#2a2f42" stroke-width="2.1"/></svg></div>
<div class="a" style="left:1387px;top:224px;width:16px;height:16px;box-sizing:border-box;border:1px solid #596073;border-radius:2px;box-shadow:inset 0 0 0 1px #f6f7fa,inset 0 0 0 2px #8f95a8;background:linear-gradient(135deg,#c9ccd9 25%,#e9eaf0 75%);"><svg width="14" height="14" viewBox="0 0 14 14" style="position:absolute;left:0;top:0"><path d="M3.2 8.2 L5.9 10.9 L11.4 3.6" fill="none" stroke="#2a2f42" stroke-width="2.1"/></svg></div>
<div class="t" style="left:1479.4px;top:222.1px;font-size:15px;color:#0c0c14;"><span style="transform:scaleX(0.8197);transform-origin:0 50%;">System</span></div>
<div class="t" style="left:1649px;top:222.1px;font-size:15px;color:#0c0c14;"><span style="transform:scaleX(0.8832);transform-origin:0 50%;">Main Location</span></div>
<div class="t" style="left:1774px;top:222.1px;font-size:15px;color:#0c0c14;"><span style="transform:scaleX(0.8394);transform-origin:0 50%;">Editorial</span></div>
<div class="t" style="left:1899.5px;top:222.1px;font-size:15px;color:#0c0c14;"><span style="transform:scaleX(0.8862);transform-origin:0 50%;">Meadowrue Lane ...</span></div>
<div class="t" style="left:2024.3px;top:222.1px;font-size:15px;color:#0c0c14;"><span style="transform:scaleX(0.8621);transform-origin:0 50%;">No Shift</span></div>
<div class="t" style="left:2149.5px;top:222.1px;font-size:15px;color:#0c0c14;"><span style="transform:scaleX(0.8921);transform-origin:0 50%;">Unknown</span></div>
<div class="t" style="left:2274.3px;top:222.1px;font-size:15px;color:#0c0c14;"><span style="transform:scaleX(0.8487);transform-origin:0 50%;">Inserted</span></div>
<div class="a" style="left:370px;top:246px;width:2028px;height:26px;background:#fafafa;"></div>
<div class="a" style="left:1072px;top:246px;width:63px;height:26px;background:#e2e2e2;"></div>
<div class="a" style="left:1136px;top:246px;width:63px;height:26px;background:#e2e2e2;"></div>
<div class="a" style="left:2398px;top:246px;width:166px;height:26px;background:#848484;"></div>
<div class="a" style="left:2398px;top:272px;width:166px;height:1px;background:#b4b7c2;"></div>
<div class="a" style="left:370px;top:272px;width:2028px;height:1px;background:#c9cdd8;"></div>
<div class="a" style="left:379px;top:252px;width:16px;height:16px;box-sizing:border-box;border:1px solid #596073;border-radius:2px;box-shadow:inset 0 0 0 1px #f6f7fa,inset 0 0 0 2px #8f95a8;background:linear-gradient(135deg,#c9ccd9 25%,#e9eaf0 75%);"><svg width="14" height="14" viewBox="0 0 14 14" style="position:absolute;left:0;top:0"><path d="M3.2 8.2 L5.9 10.9 L11.4 3.6" fill="none" stroke="#2a2f42" stroke-width="2.1"/></svg></div>
<div class="t" style="left:440.3px;top:250.1px;font-size:15px;color:#0c0c14;"><span style="transform:scaleX(0.8841);transform-origin:0 50%;">OUT</span></div>
<div class="t" style="left:566px;top:250.1px;font-size:15px;color:#0c0c14;"><span style="transform:scaleX(0.8565);transform-origin:0 50%;">Mon</span></div>
<div class="t" style="left:663.3px;top:250.1px;font-size:15px;color:#0c0c14;"><span style="transform:scaleX(0.8600);transform-origin:100% 50%;">-</span></div>
<div class="t" style="left:712.3px;top:250.1px;font-size:15px;color:#0c0c14;"><span style="transform:scaleX(0.8835);transform-origin:100% 50%;">9.75</span></div>
<div class="t" style="left:779.8px;top:250.1px;font-size:15px;color:#0c0c14;"><span style="transform:scaleX(0.8835);transform-origin:100% 50%;">9.75</span></div>
<div class="t" style="left:875px;top:250.1px;font-size:15px;color:#0c0c14;"><span style="transform:scaleX(0.8600);transform-origin:100% 50%;">-</span></div>
<div class="t" style="left:916.2px;top:250.1px;font-size:15px;color:#0c0c14;"><span style="transform:scaleX(0.8835);transform-origin:100% 50%;">9.75</span></div>
<div class="t" style="left:996.4px;top:250.1px;font-size:15px;color:#0c0c14;"><span style="transform:scaleX(0.8835);transform-origin:100% 50%;">9.75</span></div>
<div class="t" style="left:1063px;top:250.1px;font-size:15px;color:#0c0c14;"><span style="transform:scaleX(0.8600);transform-origin:100% 50%;">-</span></div>
<div class="t" style="left:1220.77px;top:250.1px;font-size:15px;color:#0c0c14;"><span style="transform:scaleX(0.8924);transform-origin:100% 50%;">$263.00</span></div>
<div class="t" style="left:1129px;top:250.1px;font-size:15px;color:#0c0c14;font-weight:700;"><span style="transform:scaleX(1.1400);transform-origin:100% 50%;">-</span></div>
<div class="t" style="left:1192.8px;top:250.1px;font-size:15px;color:#0c0c14;font-weight:700;"><span style="transform:scaleX(1.1400);transform-origin:100% 50%;">-</span></div>
<div class="a" style="left:1312px;top:252px;width:16px;height:16px;box-sizing:border-box;border:1px solid #596073;border-radius:2px;box-shadow:inset 0 0 0 1px #f6f7fa,inset 0 0 0 2px #8f95a8;background:linear-gradient(135deg,#c9ccd9 25%,#e9eaf0 75%);"><svg width="14" height="14" viewBox="0 0 14 14" style="position:absolute;left:0;top:0"><path d="M3.2 8.2 L5.9 10.9 L11.4 3.6" fill="none" stroke="#2a2f42" stroke-width="2.1"/></svg></div>
<div class="a" style="left:1387px;top:252px;width:16px;height:16px;box-sizing:border-box;border:1px solid #596073;border-radius:2px;box-shadow:inset 0 0 0 1px #f6f7fa,inset 0 0 0 2px #8f95a8;background:linear-gradient(135deg,#c9ccd9 25%,#e9eaf0 75%);"></div>
<div class="t" style="left:1479.4px;top:250.1px;font-size:15px;color:#0c0c14;"><span style="transform:scaleX(0.8197);transform-origin:0 50%;">System</span></div>
<div class="t" style="left:1649px;top:250.1px;font-size:15px;color:#0c0c14;"><span style="transform:scaleX(0.8832);transform-origin:0 50%;">Main Location</span></div>
<div class="t" style="left:1774px;top:250.1px;font-size:15px;color:#0c0c14;"><span style="transform:scaleX(0.8394);transform-origin:0 50%;">Editorial</span></div>
<div class="t" style="left:1899.5px;top:250.1px;font-size:15px;color:#0c0c14;"><span style="transform:scaleX(0.8862);transform-origin:0 50%;">Meadowrue Lane ...</span></div>
<div class="t" style="left:2024.3px;top:250.1px;font-size:15px;color:#0c0c14;"><span style="transform:scaleX(0.8621);transform-origin:0 50%;">No Shift</span></div>
<div class="t" style="left:2149.5px;top:250.1px;font-size:15px;color:#0c0c14;"><span style="transform:scaleX(0.8921);transform-origin:0 50%;">Unknown</span></div>
<div class="t" style="left:2274.3px;top:250.1px;font-size:15px;color:#0c0c14;"><span style="transform:scaleX(0.8487);transform-origin:0 50%;">Inserted</span></div>
<div class="a" style="left:370px;top:273px;width:2028px;height:27px;background:#fafafa;"></div>
<div class="a" style="left:1072px;top:273px;width:63px;height:27px;background:#e2e2e2;"></div>
<div class="a" style="left:1136px;top:273px;width:63px;height:27px;background:#e2e2e2;"></div>
<div class="a" style="left:2398px;top:273px;width:166px;height:27px;background:#848484;"></div>
<div class="a" style="left:2398px;top:300px;width:166px;height:1px;background:#b4b7c2;"></div>
<div class="a" style="left:370px;top:300px;width:2028px;height:1px;background:#c9cdd8;"></div>
<div class="a" style="left:379px;top:279px;width:16px;height:16px;box-sizing:border-box;border:1px solid #596073;border-radius:2px;box-shadow:inset 0 0 0 1px #f6f7fa,inset 0 0 0 2px #8f95a8;background:linear-gradient(135deg,#c9ccd9 25%,#e9eaf0 75%);"><svg width="14" height="14" viewBox="0 0 14 14" style="position:absolute;left:0;top:0"><path d="M3.2 8.2 L5.9 10.9 L11.4 3.6" fill="none" stroke="#2a2f42" stroke-width="2.1"/></svg></div>
<svg class="a" style="left:414px;top:279px;" width="18" height="17" viewBox="0 0 18 17"><path d="M1.5 0.5 L17 8.3 L1.5 16 Z" fill="#0c850c"/><path d="M1.5 0.5 V16" stroke="#b9c850" stroke-width="1"/></svg>
<div class="t" style="left:440.3px;top:277.1px;font-size:15px;color:#0c0c14;"><span style="transform:scaleX(0.8200);transform-origin:0 50%;">IN</span></div>
<div class="t" style="left:566px;top:277.1px;font-size:15px;color:#0c0c14;"><span style="transform:scaleX(0.9092);transform-origin:0 50%;">Tue</span></div>
<div class="t" style="left:663.3px;top:277.1px;font-size:15px;color:#0c0c14;"><span style="transform:scaleX(0.8600);transform-origin:100% 50%;">-</span></div>
<div class="t" style="left:736.5px;top:277.1px;font-size:15px;color:#0c0c14;"><span style="transform:scaleX(0.8600);transform-origin:100% 50%;">-</span></div>
<div class="t" style="left:804px;top:277.1px;font-size:15px;color:#0c0c14;"><span style="transform:scaleX(0.8600);transform-origin:100% 50%;">-</span></div>
<div class="t" style="left:875px;top:277.1px;font-size:15px;color:#0c0c14;"><span style="transform:scaleX(0.8600);transform-origin:100% 50%;">-</span></div>
<div class="t" style="left:940.4px;top:277.1px;font-size:15px;color:#0c0c14;"><span style="transform:scaleX(0.8600);transform-origin:100% 50%;">-</span></div>
<div class="t" style="left:1020.6px;top:277.1px;font-size:15px;color:#0c0c14;"><span style="transform:scaleX(0.8600);transform-origin:100% 50%;">-</span></div>
<div class="t" style="left:1063px;top:277.1px;font-size:15px;color:#0c0c14;"><span style="transform:scaleX(0.8600);transform-origin:100% 50%;">-</span></div>
<div class="t" style="left:1270px;top:277.1px;font-size:15px;color:#0c0c14;"><span style="transform:scaleX(0.8600);transform-origin:100% 50%;">-</span></div>
<div class="t" style="left:1129px;top:277.1px;font-size:15px;color:#0c0c14;font-weight:700;"><span style="transform:scaleX(1.1400);transform-origin:100% 50%;">-</span></div>
<div class="t" style="left:1192.8px;top:277.1px;font-size:15px;color:#0c0c14;font-weight:700;"><span style="transform:scaleX(1.1400);transform-origin:100% 50%;">-</span></div>
<div class="a" style="left:1312px;top:279px;width:16px;height:16px;box-sizing:border-box;border:1px solid #596073;border-radius:2px;box-shadow:inset 0 0 0 1px #f6f7fa,inset 0 0 0 2px #8f95a8;background:linear-gradient(135deg,#c9ccd9 25%,#e9eaf0 75%);"><svg width="14" height="14" viewBox="0 0 14 14" style="position:absolute;left:0;top:0"><path d="M3.2 8.2 L5.9 10.9 L11.4 3.6" fill="none" stroke="#2a2f42" stroke-width="2.1"/></svg></div>
<div class="a" style="left:1387px;top:279px;width:16px;height:16px;box-sizing:border-box;border:1px solid #596073;border-radius:2px;box-shadow:inset 0 0 0 1px #f6f7fa,inset 0 0 0 2px #8f95a8;background:linear-gradient(135deg,#c9ccd9 25%,#e9eaf0 75%);"></div>
<div class="t" style="left:1479.4px;top:277.1px;font-size:15px;color:#0c0c14;"><span style="transform:scaleX(0.8197);transform-origin:0 50%;">System</span></div>
<div class="t" style="left:1649px;top:277.1px;font-size:15px;color:#0c0c14;"><span style="transform:scaleX(0.8832);transform-origin:0 50%;">Main Location</span></div>
<div class="t" style="left:1774px;top:277.1px;font-size:15px;color:#0c0c14;"><span style="transform:scaleX(0.8394);transform-origin:0 50%;">Editorial</span></div>
<div class="t" style="left:1899.5px;top:277.1px;font-size:15px;color:#0c0c14;"><span style="transform:scaleX(0.8862);transform-origin:0 50%;">Meadowrue Lane ...</span></div>
<div class="t" style="left:2024.3px;top:277.1px;font-size:15px;color:#0c0c14;"><span style="transform:scaleX(0.8621);transform-origin:0 50%;">No Shift</span></div>
<div class="t" style="left:2149.5px;top:277.1px;font-size:15px;color:#0c0c14;"><span style="transform:scaleX(0.8921);transform-origin:0 50%;">Unknown</span></div>
<div class="t" style="left:2274.3px;top:277.1px;font-size:15px;color:#0c0c14;"><span style="transform:scaleX(0.8487);transform-origin:0 50%;">Inserted</span></div>
<div class="a" style="left:370px;top:301px;width:2028px;height:26px;background:#fafafa;"></div>
<div class="a" style="left:1072px;top:301px;width:63px;height:26px;background:#e2e2e2;"></div>
<div class="a" style="left:1136px;top:301px;width:63px;height:26px;background:#e2e2e2;"></div>
<div class="a" style="left:2398px;top:301px;width:166px;height:26px;background:#848484;"></div>
<div class="a" style="left:2398px;top:327px;width:166px;height:1px;background:#b4b7c2;"></div>
<div class="a" style="left:370px;top:327px;width:2028px;height:1px;background:#c9cdd8;"></div>
<div class="a" style="left:379px;top:307px;width:16px;height:16px;box-sizing:border-box;border:1px solid #596073;border-radius:2px;box-shadow:inset 0 0 0 1px #f6f7fa,inset 0 0 0 2px #8f95a8;background:linear-gradient(135deg,#c9ccd9 25%,#e9eaf0 75%);"><svg width="14" height="14" viewBox="0 0 14 14" style="position:absolute;left:0;top:0"><path d="M3.2 8.2 L5.9 10.9 L11.4 3.6" fill="none" stroke="#2a2f42" stroke-width="2.1"/></svg></div>
<div class="t" style="left:440.3px;top:305.1px;font-size:15px;color:#0c0c14;"><span style="transform:scaleX(0.8841);transform-origin:0 50%;">OUT</span></div>
<div class="t" style="left:566px;top:305.1px;font-size:15px;color:#0c0c14;"><span style="transform:scaleX(0.9092);transform-origin:0 50%;">Tue</span></div>
<div class="t" style="left:663.3px;top:305.1px;font-size:15px;color:#0c0c14;"><span style="transform:scaleX(0.8600);transform-origin:100% 50%;">-</span></div>
<div class="t" style="left:712.3px;top:305.1px;font-size:15px;color:#0c0c14;"><span style="transform:scaleX(0.8835);transform-origin:100% 50%;">9.75</span></div>
<div class="t" style="left:779.8px;top:305.1px;font-size:15px;color:#0c0c14;"><span style="transform:scaleX(0.8835);transform-origin:100% 50%;">9.75</span></div>
<div class="t" style="left:875px;top:305.1px;font-size:15px;color:#0c0c14;"><span style="transform:scaleX(0.8600);transform-origin:100% 50%;">-</span></div>
<div class="t" style="left:907.85px;top:305.1px;font-size:15px;color:#0c0c14;"><span style="transform:scaleX(0.8789);transform-origin:100% 50%;">19.50</span></div>
<div class="t" style="left:996.4px;top:305.1px;font-size:15px;color:#0c0c14;"><span style="transform:scaleX(0.8835);transform-origin:100% 50%;">9.75</span></div>
<div class="t" style="left:1063px;top:305.1px;font-size:15px;color:#0c0c14;"><span style="transform:scaleX(0.8600);transform-origin:100% 50%;">-</span></div>
<div class="t" style="left:1220.77px;top:305.1px;font-size:15px;color:#0c0c14;"><span style="transform:scaleX(0.8924);transform-origin:100% 50%;">$263.00</span></div>
<div class="t" style="left:1129px;top:305.1px;font-size:15px;color:#0c0c14;font-weight:700;"><span style="transform:scaleX(1.1400);transform-origin:100% 50%;">-</span></div>
<div class="t" style="left:1192.8px;top:305.1px;font-size:15px;color:#0c0c14;font-weight:700;"><span style="transform:scaleX(1.1400);transform-origin:100% 50%;">-</span></div>
<div class="a" style="left:1312px;top:307px;width:16px;height:16px;box-sizing:border-box;border:1px solid #596073;border-radius:2px;box-shadow:inset 0 0 0 1px #f6f7fa,inset 0 0 0 2px #8f95a8;background:linear-gradient(135deg,#c9ccd9 25%,#e9eaf0 75%);"><svg width="14" height="14" viewBox="0 0 14 14" style="position:absolute;left:0;top:0"><path d="M3.2 8.2 L5.9 10.9 L11.4 3.6" fill="none" stroke="#2a2f42" stroke-width="2.1"/></svg></div>
<div class="a" style="left:1387px;top:307px;width:16px;height:16px;box-sizing:border-box;border:1px solid #596073;border-radius:2px;box-shadow:inset 0 0 0 1px #f6f7fa,inset 0 0 0 2px #8f95a8;background:linear-gradient(135deg,#c9ccd9 25%,#e9eaf0 75%);"></div>
<div class="t" style="left:1479.4px;top:305.1px;font-size:15px;color:#0c0c14;"><span style="transform:scaleX(0.8197);transform-origin:0 50%;">System</span></div>
<div class="t" style="left:1649px;top:305.1px;font-size:15px;color:#0c0c14;"><span style="transform:scaleX(0.8832);transform-origin:0 50%;">Main Location</span></div>
<div class="t" style="left:1774px;top:305.1px;font-size:15px;color:#0c0c14;"><span style="transform:scaleX(0.8394);transform-origin:0 50%;">Editorial</span></div>
<div class="t" style="left:1899.5px;top:305.1px;font-size:15px;color:#0c0c14;"><span style="transform:scaleX(0.8862);transform-origin:0 50%;">Meadowrue Lane ...</span></div>
<div class="t" style="left:2024.3px;top:305.1px;font-size:15px;color:#0c0c14;"><span style="transform:scaleX(0.8621);transform-origin:0 50%;">No Shift</span></div>
<div class="t" style="left:2149.5px;top:305.1px;font-size:15px;color:#0c0c14;"><span style="transform:scaleX(0.8921);transform-origin:0 50%;">Unknown</span></div>
<div class="t" style="left:2274.3px;top:305.1px;font-size:15px;color:#0c0c14;"><span style="transform:scaleX(0.8487);transform-origin:0 50%;">Inserted</span></div>
<div class="a" style="left:370px;top:328px;width:2028px;height:27px;background:#fafafa;"></div>
<div class="a" style="left:1072px;top:328px;width:63px;height:27px;background:#e2e2e2;"></div>
<div class="a" style="left:1136px;top:328px;width:63px;height:27px;background:#e2e2e2;"></div>
<div class="a" style="left:2398px;top:328px;width:166px;height:27px;background:#848484;"></div>
<div class="a" style="left:2398px;top:355px;width:166px;height:1px;background:#b4b7c2;"></div>
<div class="a" style="left:370px;top:355px;width:2028px;height:1px;background:#c9cdd8;"></div>
<div class="a" style="left:379px;top:334px;width:16px;height:16px;box-sizing:border-box;border:1px solid #596073;border-radius:2px;box-shadow:inset 0 0 0 1px #f6f7fa,inset 0 0 0 2px #8f95a8;background:linear-gradient(135deg,#c9ccd9 25%,#e9eaf0 75%);"><svg width="14" height="14" viewBox="0 0 14 14" style="position:absolute;left:0;top:0"><path d="M3.2 8.2 L5.9 10.9 L11.4 3.6" fill="none" stroke="#2a2f42" stroke-width="2.1"/></svg></div>
<svg class="a" style="left:414px;top:334px;" width="18" height="17" viewBox="0 0 18 17"><path d="M1.5 0.5 L17 8.3 L1.5 16 Z" fill="#0c850c"/><path d="M1.5 0.5 V16" stroke="#b9c850" stroke-width="1"/></svg>
<div class="t" style="left:440.3px;top:332.1px;font-size:15px;color:#0c0c14;"><span style="transform:scaleX(0.8200);transform-origin:0 50%;">IN</span></div>
<div class="t" style="left:566px;top:332.1px;font-size:15px;color:#0c0c14;"><span style="transform:scaleX(0.8666);transform-origin:0 50%;">Wed</span></div>
<div class="t" style="left:663.3px;top:332.1px;font-size:15px;color:#0c0c14;"><span style="transform:scaleX(0.8600);transform-origin:100% 50%;">-</span></div>
<div class="t" style="left:736.5px;top:332.1px;font-size:15px;color:#0c0c14;"><span style="transform:scaleX(0.8600);transform-origin:100% 50%;">-</span></div>
<div class="t" style="left:804px;top:332.1px;font-size:15px;color:#0c0c14;"><span style="transform:scaleX(0.8600);transform-origin:100% 50%;">-</span></div>
<div class="t" style="left:875px;top:332.1px;font-size:15px;color:#0c0c14;"><span style="transform:scaleX(0.8600);transform-origin:100% 50%;">-</span></div>
<div class="t" style="left:940.4px;top:332.1px;font-size:15px;color:#0c0c14;"><span style="transform:scaleX(0.8600);transform-origin:100% 50%;">-</span></div>
<div class="t" style="left:1020.6px;top:332.1px;font-size:15px;color:#0c0c14;"><span style="transform:scaleX(0.8600);transform-origin:100% 50%;">-</span></div>
<div class="t" style="left:1063px;top:332.1px;font-size:15px;color:#0c0c14;"><span style="transform:scaleX(0.8600);transform-origin:100% 50%;">-</span></div>
<div class="t" style="left:1270px;top:332.1px;font-size:15px;color:#0c0c14;"><span style="transform:scaleX(0.8600);transform-origin:100% 50%;">-</span></div>
<div class="t" style="left:1129px;top:332.1px;font-size:15px;color:#0c0c14;font-weight:700;"><span style="transform:scaleX(1.1400);transform-origin:100% 50%;">-</span></div>
<div class="t" style="left:1192.8px;top:332.1px;font-size:15px;color:#0c0c14;font-weight:700;"><span style="transform:scaleX(1.1400);transform-origin:100% 50%;">-</span></div>
<div class="a" style="left:1312px;top:334px;width:16px;height:16px;box-sizing:border-box;border:1px solid #596073;border-radius:2px;box-shadow:inset 0 0 0 1px #f6f7fa,inset 0 0 0 2px #8f95a8;background:linear-gradient(135deg,#c9ccd9 25%,#e9eaf0 75%);"><svg width="14" height="14" viewBox="0 0 14 14" style="position:absolute;left:0;top:0"><path d="M3.2 8.2 L5.9 10.9 L11.4 3.6" fill="none" stroke="#2a2f42" stroke-width="2.1"/></svg></div>
<div class="a" style="left:1387px;top:334px;width:16px;height:16px;box-sizing:border-box;border:1px solid #596073;border-radius:2px;box-shadow:inset 0 0 0 1px #f6f7fa,inset 0 0 0 2px #8f95a8;background:linear-gradient(135deg,#c9ccd9 25%,#e9eaf0 75%);"></div>
<div class="t" style="left:1479.4px;top:332.1px;font-size:15px;color:#0c0c14;"><span style="transform:scaleX(0.8197);transform-origin:0 50%;">System</span></div>
<div class="t" style="left:1649px;top:332.1px;font-size:15px;color:#0c0c14;"><span style="transform:scaleX(0.8832);transform-origin:0 50%;">Main Location</span></div>
<div class="t" style="left:1774px;top:332.1px;font-size:15px;color:#0c0c14;"><span style="transform:scaleX(0.8394);transform-origin:0 50%;">Editorial</span></div>
<div class="t" style="left:1899.5px;top:332.1px;font-size:15px;color:#0c0c14;"><span style="transform:scaleX(0.8862);transform-origin:0 50%;">Meadowrue Lane ...</span></div>
<div class="t" style="left:2024.3px;top:332.1px;font-size:15px;color:#0c0c14;"><span style="transform:scaleX(0.8621);transform-origin:0 50%;">No Shift</span></div>
<div class="t" style="left:2149.5px;top:332.1px;font-size:15px;color:#0c0c14;"><span style="transform:scaleX(0.8921);transform-origin:0 50%;">Unknown</span></div>
<div class="t" style="left:2274.3px;top:332.1px;font-size:15px;color:#0c0c14;"><span style="transform:scaleX(0.8487);transform-origin:0 50%;">Inserted</span></div>
<div class="a" style="left:370px;top:356px;width:2028px;height:26px;background:#fafafa;"></div>
<div class="a" style="left:1072px;top:356px;width:63px;height:26px;background:#e2e2e2;"></div>
<div class="a" style="left:1136px;top:356px;width:63px;height:26px;background:#e2e2e2;"></div>
<div class="a" style="left:2398px;top:356px;width:166px;height:26px;background:#fcfcfc;"></div>
<div class="a" style="left:2398px;top:382px;width:166px;height:1px;background:#fcfcfc;"></div>
<div class="a" style="left:370px;top:382px;width:2028px;height:1px;background:#c9cdd8;"></div>
<div class="a" style="left:379px;top:362px;width:16px;height:16px;box-sizing:border-box;border:1px solid #596073;border-radius:2px;box-shadow:inset 0 0 0 1px #f6f7fa,inset 0 0 0 2px #8f95a8;background:linear-gradient(135deg,#c9ccd9 25%,#e9eaf0 75%);"><svg width="14" height="14" viewBox="0 0 14 14" style="position:absolute;left:0;top:0"><path d="M3.2 8.2 L5.9 10.9 L11.4 3.6" fill="none" stroke="#2a2f42" stroke-width="2.1"/></svg></div>
<div class="t" style="left:440.3px;top:360.1px;font-size:15px;color:#0c0c14;"><span style="transform:scaleX(0.8841);transform-origin:0 50%;">OUT</span></div>
<div class="t" style="left:566px;top:360.1px;font-size:15px;color:#0c0c14;"><span style="transform:scaleX(0.8666);transform-origin:0 50%;">Wed</span></div>
<div class="t" style="left:663.3px;top:360.1px;font-size:15px;color:#0c0c14;"><span style="transform:scaleX(0.8600);transform-origin:100% 50%;">-</span></div>
<div class="t" style="left:705.06px;top:360.1px;font-size:15px;color:#0c0c14;"><span style="transform:scaleX(0.8782);transform-origin:100% 50%;">11.50</span></div>
<div class="t" style="left:772.56px;top:360.1px;font-size:15px;color:#0c0c14;"><span style="transform:scaleX(0.8782);transform-origin:100% 50%;">11.50</span></div>
<div class="t" style="left:875px;top:360.1px;font-size:15px;color:#0c0c14;"><span style="transform:scaleX(0.8600);transform-origin:100% 50%;">-</span></div>
<div class="t" style="left:907.85px;top:360.1px;font-size:15px;color:#0c0c14;"><span style="transform:scaleX(0.8789);transform-origin:100% 50%;">31.00</span></div>
<div class="t" style="left:989.16px;top:360.1px;font-size:15px;color:#0c0c14;"><span style="transform:scaleX(0.8782);transform-origin:100% 50%;">11.50</span></div>
<div class="t" style="left:1063px;top:360.1px;font-size:15px;color:#0c0c14;"><span style="transform:scaleX(0.8600);transform-origin:100% 50%;">-</span></div>
<div class="t" style="left:1220.77px;top:360.1px;font-size:15px;color:#0c0c14;"><span style="transform:scaleX(0.8924);transform-origin:100% 50%;">$310.00</span></div>
<div class="t" style="left:1129px;top:360.1px;font-size:15px;color:#0c0c14;font-weight:700;"><span style="transform:scaleX(1.1400);transform-origin:100% 50%;">-</span></div>
<div class="t" style="left:1192.8px;top:360.1px;font-size:15px;color:#0c0c14;font-weight:700;"><span style="transform:scaleX(1.1400);transform-origin:100% 50%;">-</span></div>
<div class="a" style="left:1312px;top:362px;width:16px;height:16px;box-sizing:border-box;border:1px solid #596073;border-radius:2px;box-shadow:inset 0 0 0 1px #f6f7fa,inset 0 0 0 2px #8f95a8;background:linear-gradient(135deg,#c9ccd9 25%,#e9eaf0 75%);"><svg width="14" height="14" viewBox="0 0 14 14" style="position:absolute;left:0;top:0"><path d="M3.2 8.2 L5.9 10.9 L11.4 3.6" fill="none" stroke="#2a2f42" stroke-width="2.1"/></svg></div>
<div class="a" style="left:1387px;top:362px;width:16px;height:16px;box-sizing:border-box;border:1px solid #596073;border-radius:2px;box-shadow:inset 0 0 0 1px #f6f7fa,inset 0 0 0 2px #8f95a8;background:linear-gradient(135deg,#c9ccd9 25%,#e9eaf0 75%);"></div>
<div class="t" style="left:1479.4px;top:360.1px;font-size:15px;color:#0c0c14;"><span style="transform:scaleX(0.8197);transform-origin:0 50%;">System</span></div>
<div class="t" style="left:1649px;top:360.1px;font-size:15px;color:#0c0c14;"><span style="transform:scaleX(0.8832);transform-origin:0 50%;">Main Location</span></div>
<div class="t" style="left:1774px;top:360.1px;font-size:15px;color:#0c0c14;"><span style="transform:scaleX(0.8394);transform-origin:0 50%;">Editorial</span></div>
<div class="t" style="left:1899.5px;top:360.1px;font-size:15px;color:#0c0c14;"><span style="transform:scaleX(0.8862);transform-origin:0 50%;">Meadowrue Lane ...</span></div>
<div class="t" style="left:2024.3px;top:360.1px;font-size:15px;color:#0c0c14;"><span style="transform:scaleX(0.8621);transform-origin:0 50%;">No Shift</span></div>
<div class="t" style="left:2149.5px;top:360.1px;font-size:15px;color:#0c0c14;"><span style="transform:scaleX(0.8921);transform-origin:0 50%;">Unknown</span></div>
<div class="t" style="left:2274.3px;top:360.1px;font-size:15px;color:#0c0c14;"><span style="transform:scaleX(0.8487);transform-origin:0 50%;">Inserted</span></div>
<div class="a" style="left:370px;top:383px;width:2028px;height:27px;background:#fafafa;"></div>
<div class="a" style="left:1072px;top:383px;width:63px;height:27px;background:#e2e2e2;"></div>
<div class="a" style="left:1136px;top:383px;width:63px;height:27px;background:#e2e2e2;"></div>
<div class="a" style="left:2398px;top:383px;width:166px;height:27px;background:#848484;"></div>
<div class="a" style="left:2398px;top:410px;width:166px;height:1px;background:#b4b7c2;"></div>
<div class="a" style="left:370px;top:410px;width:2028px;height:1px;background:#c9cdd8;"></div>
<div class="a" style="left:379px;top:389px;width:16px;height:16px;box-sizing:border-box;border:1px solid #596073;border-radius:2px;box-shadow:inset 0 0 0 1px #f6f7fa,inset 0 0 0 2px #8f95a8;background:linear-gradient(135deg,#c9ccd9 25%,#e9eaf0 75%);"><svg width="14" height="14" viewBox="0 0 14 14" style="position:absolute;left:0;top:0"><path d="M3.2 8.2 L5.9 10.9 L11.4 3.6" fill="none" stroke="#2a2f42" stroke-width="2.1"/></svg></div>
<svg class="a" style="left:414px;top:389px;" width="18" height="17" viewBox="0 0 18 17"><path d="M1.5 0.5 L17 8.3 L1.5 16 Z" fill="#0c850c"/><path d="M1.5 0.5 V16" stroke="#b9c850" stroke-width="1"/></svg>
<div class="t" style="left:1270px;top:387.1px;font-size:15px;color:#0c0c14;"><span style="transform:scaleX(0.8600);transform-origin:100% 50%;">-</span></div>
<div class="t" style="left:1129px;top:387.1px;font-size:15px;color:#0c0c14;font-weight:700;"><span style="transform:scaleX(1.1400);transform-origin:100% 50%;">-</span></div>
<div class="t" style="left:1192.8px;top:387.1px;font-size:15px;color:#0c0c14;font-weight:700;"><span style="transform:scaleX(1.1400);transform-origin:100% 50%;">-</span></div>
<div class="a" style="left:1312px;top:389px;width:16px;height:16px;box-sizing:border-box;border:1px solid #596073;border-radius:2px;box-shadow:inset 0 0 0 1px #f6f7fa,inset 0 0 0 2px #8f95a8;background:linear-gradient(135deg,#c9ccd9 25%,#e9eaf0 75%);"><svg width="14" height="14" viewBox="0 0 14 14" style="position:absolute;left:0;top:0"><path d="M3.2 8.2 L5.9 10.9 L11.4 3.6" fill="none" stroke="#2a2f42" stroke-width="2.1"/></svg></div>
<div class="a" style="left:1387px;top:389px;width:16px;height:16px;box-sizing:border-box;border:1px solid #596073;border-radius:2px;box-shadow:inset 0 0 0 1px #f6f7fa,inset 0 0 0 2px #8f95a8;background:linear-gradient(135deg,#c9ccd9 25%,#e9eaf0 75%);"><svg width="14" height="14" viewBox="0 0 14 14" style="position:absolute;left:0;top:0"><path d="M3.2 8.2 L5.9 10.9 L11.4 3.6" fill="none" stroke="#2a2f42" stroke-width="2.1"/></svg></div>
<div class="t" style="left:1479.4px;top:387.1px;font-size:15px;color:#0c0c14;"><span style="transform:scaleX(0.8197);transform-origin:0 50%;">System</span></div>
<div class="t" style="left:1649px;top:387.1px;font-size:15px;color:#0c0c14;"><span style="transform:scaleX(0.8832);transform-origin:0 50%;">Main Location</span></div>
<div class="t" style="left:1774px;top:387.1px;font-size:15px;color:#0c0c14;"><span style="transform:scaleX(0.8394);transform-origin:0 50%;">Editorial</span></div>
<div class="t" style="left:1899.5px;top:387.1px;font-size:15px;color:#0c0c14;"><span style="transform:scaleX(0.8862);transform-origin:0 50%;">Meadowrue Lane ...</span></div>
<div class="t" style="left:2024.3px;top:387.1px;font-size:15px;color:#0c0c14;"><span style="transform:scaleX(0.8621);transform-origin:0 50%;">No Shift</span></div>
<div class="t" style="left:2149.5px;top:387.1px;font-size:15px;color:#0c0c14;"><span style="transform:scaleX(0.8921);transform-origin:0 50%;">Unknown</span></div>
<div class="t" style="left:2274.3px;top:387.1px;font-size:15px;color:#0c0c14;"><span style="transform:scaleX(0.8487);transform-origin:0 50%;">Inserted</span></div>
<div class="a" style="left:370px;top:411px;width:2028px;height:26px;background:#fafafa;"></div>
<div class="a" style="left:1072px;top:411px;width:63px;height:26px;background:#e2e2e2;"></div>
<div class="a" style="left:1136px;top:411px;width:63px;height:26px;background:#e2e2e2;"></div>
<div class="a" style="left:2398px;top:411px;width:166px;height:26px;background:#848484;"></div>
<div class="a" style="left:2398px;top:437px;width:166px;height:1px;background:#b4b7c2;"></div>
<div class="a" style="left:370px;top:437px;width:2028px;height:1px;background:#c9cdd8;"></div>
<div class="a" style="left:379px;top:417px;width:16px;height:16px;box-sizing:border-box;border:1px solid #596073;border-radius:2px;box-shadow:inset 0 0 0 1px #f6f7fa,inset 0 0 0 2px #8f95a8;background:linear-gradient(135deg,#c9ccd9 25%,#e9eaf0 75%);"><svg width="14" height="14" viewBox="0 0 14 14" style="position:absolute;left:0;top:0"><path d="M3.2 8.2 L5.9 10.9 L11.4 3.6" fill="none" stroke="#2a2f42" stroke-width="2.1"/></svg></div>
<div class="t" style="left:1220.77px;top:415.1px;font-size:15px;color:#0c0c14;"><span style="transform:scaleX(0.8924);transform-origin:100% 50%;">$395.00</span></div>
<div class="t" style="left:1129px;top:415.1px;font-size:15px;color:#0c0c14;font-weight:700;"><span style="transform:scaleX(1.1400);transform-origin:100% 50%;">-</span></div>
<div class="t" style="left:1192.8px;top:415.1px;font-size:15px;color:#0c0c14;font-weight:700;"><span style="transform:scaleX(1.1400);transform-origin:100% 50%;">-</span></div>
<div class="a" style="left:1312px;top:417px;width:16px;height:16px;box-sizing:border-box;border:1px solid #596073;border-radius:2px;box-shadow:inset 0 0 0 1px #f6f7fa,inset 0 0 0 2px #8f95a8;background:linear-gradient(135deg,#c9ccd9 25%,#e9eaf0 75%);"><svg width="14" height="14" viewBox="0 0 14 14" style="position:absolute;left:0;top:0"><path d="M3.2 8.2 L5.9 10.9 L11.4 3.6" fill="none" stroke="#2a2f42" stroke-width="2.1"/></svg></div>
<div class="a" style="left:1387px;top:417px;width:16px;height:16px;box-sizing:border-box;border:1px solid #596073;border-radius:2px;box-shadow:inset 0 0 0 1px #f6f7fa,inset 0 0 0 2px #8f95a8;background:linear-gradient(135deg,#c9ccd9 25%,#e9eaf0 75%);"></div>
<div class="t" style="left:1479.4px;top:415.1px;font-size:15px;color:#0c0c14;"><span style="transform:scaleX(0.8197);transform-origin:0 50%;">System</span></div>
<div class="t" style="left:1649px;top:415.1px;font-size:15px;color:#0c0c14;"><span style="transform:scaleX(0.8832);transform-origin:0 50%;">Main Location</span></div>
<div class="t" style="left:1774px;top:415.1px;font-size:15px;color:#0c0c14;"><span style="transform:scaleX(0.8394);transform-origin:0 50%;">Editorial</span></div>
<div class="t" style="left:1899.5px;top:415.1px;font-size:15px;color:#0c0c14;"><span style="transform:scaleX(0.8862);transform-origin:0 50%;">Meadowrue Lane ...</span></div>
<div class="t" style="left:2024.3px;top:415.1px;font-size:15px;color:#0c0c14;"><span style="transform:scaleX(0.8621);transform-origin:0 50%;">No Shift</span></div>
<div class="t" style="left:2149.5px;top:415.1px;font-size:15px;color:#0c0c14;"><span style="transform:scaleX(0.8921);transform-origin:0 50%;">Unknown</span></div>
<div class="t" style="left:2274.3px;top:415.1px;font-size:15px;color:#0c0c14;"><span style="transform:scaleX(0.8487);transform-origin:0 50%;">Inserted</span></div>
<div class="a" style="left:370px;top:438px;width:2028px;height:27px;background:#fafafa;"></div>
<div class="a" style="left:1072px;top:438px;width:63px;height:27px;background:#e2e2e2;"></div>
<div class="a" style="left:1136px;top:438px;width:63px;height:27px;background:#e2e2e2;"></div>
<div class="a" style="left:2398px;top:438px;width:166px;height:27px;background:#848484;"></div>
<div class="a" style="left:2398px;top:465px;width:166px;height:1px;background:#b4b7c2;"></div>
<div class="a" style="left:370px;top:465px;width:2028px;height:1px;background:#c9cdd8;"></div>
<div class="a" style="left:379px;top:444px;width:16px;height:16px;box-sizing:border-box;border:1px solid #596073;border-radius:2px;box-shadow:inset 0 0 0 1px #f6f7fa,inset 0 0 0 2px #8f95a8;background:linear-gradient(135deg,#c9ccd9 25%,#e9eaf0 75%);"><svg width="14" height="14" viewBox="0 0 14 14" style="position:absolute;left:0;top:0"><path d="M3.2 8.2 L5.9 10.9 L11.4 3.6" fill="none" stroke="#2a2f42" stroke-width="2.1"/></svg></div>
<svg class="a" style="left:414px;top:444px;" width="18" height="17" viewBox="0 0 18 17"><path d="M1.5 0.5 L17 8.3 L1.5 16 Z" fill="#0c850c"/><path d="M1.5 0.5 V16" stroke="#b9c850" stroke-width="1"/></svg>
<div class="t" style="left:1270px;top:442.1px;font-size:15px;color:#0c0c14;"><span style="transform:scaleX(0.8600);transform-origin:100% 50%;">-</span></div>
<div class="t" style="left:1129px;top:442.1px;font-size:15px;color:#0c0c14;font-weight:700;"><span style="transform:scaleX(1.1400);transform-origin:100% 50%;">-</span></div>
<div class="t" style="left:1192.8px;top:442.1px;font-size:15px;color:#0c0c14;font-weight:700;"><span style="transform:scaleX(1.1400);transform-origin:100% 50%;">-</span></div>
<div class="a" style="left:1312px;top:444px;width:16px;height:16px;box-sizing:border-box;border:1px solid #596073;border-radius:2px;box-shadow:inset 0 0 0 1px #f6f7fa,inset 0 0 0 2px #8f95a8;background:linear-gradient(135deg,#c9ccd9 25%,#e9eaf0 75%);"><svg width="14" height="14" viewBox="0 0 14 14" style="position:absolute;left:0;top:0"><path d="M3.2 8.2 L5.9 10.9 L11.4 3.6" fill="none" stroke="#2a2f42" stroke-width="2.1"/></svg></div>
<div class="a" style="left:1387px;top:444px;width:16px;height:16px;box-sizing:border-box;border:1px solid #596073;border-radius:2px;box-shadow:inset 0 0 0 1px #f6f7fa,inset 0 0 0 2px #8f95a8;background:linear-gradient(135deg,#c9ccd9 25%,#e9eaf0 75%);"></div>
<div class="t" style="left:1479.4px;top:442.1px;font-size:15px;color:#0c0c14;"><span style="transform:scaleX(0.8197);transform-origin:0 50%;">System</span></div>
<div class="t" style="left:1649px;top:442.1px;font-size:15px;color:#0c0c14;"><span style="transform:scaleX(0.8832);transform-origin:0 50%;">Main Location</span></div>
<div class="t" style="left:1774px;top:442.1px;font-size:15px;color:#0c0c14;"><span style="transform:scaleX(0.8394);transform-origin:0 50%;">Editorial</span></div>
<div class="t" style="left:1899.5px;top:442.1px;font-size:15px;color:#0c0c14;"><span style="transform:scaleX(0.8862);transform-origin:0 50%;">Meadowrue Lane ...</span></div>
<div class="t" style="left:2024.3px;top:442.1px;font-size:15px;color:#0c0c14;"><span style="transform:scaleX(0.8621);transform-origin:0 50%;">No Shift</span></div>
<div class="t" style="left:2149.5px;top:442.1px;font-size:15px;color:#0c0c14;"><span style="transform:scaleX(0.8921);transform-origin:0 50%;">Unknown</span></div>
<div class="t" style="left:2274.3px;top:442.1px;font-size:15px;color:#0c0c14;"><span style="transform:scaleX(0.8487);transform-origin:0 50%;">Inserted</span></div>
<div class="a" style="left:370px;top:466px;width:2028px;height:26px;background:#fafafa;"></div>
<div class="a" style="left:1072px;top:466px;width:63px;height:26px;background:#e2e2e2;"></div>
<div class="a" style="left:1136px;top:466px;width:63px;height:26px;background:#e2e2e2;"></div>
<div class="a" style="left:2398px;top:466px;width:166px;height:26px;background:#848484;"></div>
<div class="a" style="left:2398px;top:492px;width:166px;height:1px;background:#b4b7c2;"></div>
<div class="a" style="left:370px;top:487px;width:2028px;height:5px;background:#dadada;"></div>
<div class="a" style="left:1072px;top:487px;width:127px;height:5px;background:#d2d2d2;"></div>
<div class="a" style="left:370px;top:492px;width:2028px;height:1px;background:#c9cdd8;"></div>
<div class="a" style="left:379px;top:469px;width:16px;height:16px;box-sizing:border-box;border:1px solid #596073;border-radius:2px;box-shadow:inset 0 0 0 1px #f6f7fa,inset 0 0 0 2px #8f95a8;background:linear-gradient(135deg,#c9ccd9 25%,#e9eaf0 75%);"><svg width="14" height="14" viewBox="0 0 14 14" style="position:absolute;left:0;top:0"><path d="M3.2 8.2 L5.9 10.9 L11.4 3.6" fill="none" stroke="#2a2f42" stroke-width="2.1"/></svg></div>
<div class="t" style="left:1220.77px;top:466.6px;font-size:15px;color:#0c0c14;"><span style="transform:scaleX(0.8924);transform-origin:100% 50%;">$523.00</span></div>
<div class="t" style="left:1096.45px;top:466.6px;font-size:15px;color:#0c0c14;font-weight:700;"><span>40.00</span></div>
<div class="t" style="left:1160.25px;top:466.6px;font-size:15px;color:#0c0c14;font-weight:700;"><span style="transform:scaleX(0.9801);transform-origin:100% 50%;">10.00</span></div>
<div class="a" style="left:1312px;top:469px;width:16px;height:16px;box-sizing:border-box;border:1px solid #596073;border-radius:2px;box-shadow:inset 0 0 0 1px #f6f7fa,inset 0 0 0 2px #8f95a8;background:linear-gradient(135deg,#c9ccd9 25%,#e9eaf0 75%);"></div>
<div class="a" style="left:1387px;top:469px;width:16px;height:16px;box-sizing:border-box;border:1px solid #596073;border-radius:2px;box-shadow:inset 0 0 0 1px #f6f7fa,inset 0 0 0 2px #8f95a8;background:linear-gradient(135deg,#c9ccd9 25%,#e9eaf0 75%);"><svg width="14" height="14" viewBox="0 0 14 14" style="position:absolute;left:0;top:0"><path d="M3.2 8.2 L5.9 10.9 L11.4 3.6" fill="none" stroke="#2a2f42" stroke-width="2.1"/></svg></div>
<div class="t" style="left:1479.4px;top:466.6px;font-size:15px;color:#0c0c14;"><span style="transform:scaleX(0.8959);transform-origin:0 50%;">Kennedy, John F. ...</span></div>
<svg class="a" style="left:1615px;top:467px;" width="18" height="22" viewBox="0 0 18 22"><path d="M9 20.5 C5 14.5 2 11.8 2 8 A7 7 0 0 1 16 8 C16 11.8 13 14.5 9 20.5 Z" fill="#fbf3f2" stroke="#dc3a2c" stroke-width="1.9"/></svg>
<div class="t" style="left:1620.12px;top:466.1px;font-size:13px;color:#cc4638;font-weight:700;"><span>?</span></div>
<div class="t" style="left:1649px;top:466.6px;font-size:15px;color:#0c0c14;"><span style="transform:scaleX(0.8832);transform-origin:0 50%;">Main Location</span></div>
<div class="t" style="left:1774px;top:466.6px;font-size:15px;color:#0c0c14;"><span style="transform:scaleX(0.8394);transform-origin:0 50%;">Editorial</span></div>
<div class="t" style="left:1899.5px;top:466.6px;font-size:15px;color:#0c0c14;"><span style="transform:scaleX(0.8862);transform-origin:0 50%;">Meadowrue Lane ...</span></div>
<div class="t" style="left:2024.3px;top:466.6px;font-size:15px;color:#0c0c14;"><span style="transform:scaleX(0.8621);transform-origin:0 50%;">No Shift</span></div>
<div class="t" style="left:2149.5px;top:466.6px;font-size:15px;color:#0c0c14;"><span style="transform:scaleX(0.8921);transform-origin:0 50%;">Unknown</span></div>
<div class="t" style="left:2274.3px;top:466.6px;font-size:15px;color:#0c0c14;"><span style="transform:scaleX(0.8487);transform-origin:0 50%;">Inserted</span></div>
<div class="a" style="left:370px;top:493px;width:2028px;height:27px;background:#fafafa;"></div>
<div class="a" style="left:1072px;top:493px;width:63px;height:27px;background:#e2e2e2;"></div>
<div class="a" style="left:1136px;top:493px;width:63px;height:27px;background:#e2e2e2;"></div>
<div class="a" style="left:2398px;top:493px;width:166px;height:27px;background:#848484;"></div>
<div class="a" style="left:2398px;top:520px;width:166px;height:1px;background:#b4b7c2;"></div>
<div class="a" style="left:370px;top:520px;width:2028px;height:1px;background:#c9cdd8;"></div>
<div class="a" style="left:379px;top:499px;width:16px;height:16px;box-sizing:border-box;border:1px solid #596073;border-radius:2px;box-shadow:inset 0 0 0 1px #f6f7fa,inset 0 0 0 2px #8f95a8;background:linear-gradient(135deg,#c9ccd9 25%,#e9eaf0 75%);"><svg width="14" height="14" viewBox="0 0 14 14" style="position:absolute;left:0;top:0"><path d="M3.2 8.2 L5.9 10.9 L11.4 3.6" fill="none" stroke="#2a2f42" stroke-width="2.1"/></svg></div>
<div class="a" style="left:415px;top:499px;width:6px;height:16px;background:#ff5a00;"></div>
<div class="t" style="left:1220.77px;top:497.1px;font-size:15px;color:#0c0c14;"><span style="transform:scaleX(0.8924);transform-origin:100% 50%;">$216.00</span></div>
<div class="t" style="left:1129px;top:497.1px;font-size:15px;color:#0c0c14;font-weight:700;"><span style="transform:scaleX(1.1400);transform-origin:100% 50%;">-</span></div>
<div class="t" style="left:1192.8px;top:497.1px;font-size:15px;color:#0c0c14;font-weight:700;"><span style="transform:scaleX(1.1400);transform-origin:100% 50%;">-</span></div>
<div class="a" style="left:1312px;top:499px;width:16px;height:16px;box-sizing:border-box;border:1px solid #596073;border-radius:2px;box-shadow:inset 0 0 0 1px #f6f7fa,inset 0 0 0 2px #8f95a8;background:linear-gradient(135deg,#c9ccd9 25%,#e9eaf0 75%);"><svg width="14" height="14" viewBox="0 0 14 14" style="position:absolute;left:0;top:0"><path d="M3.2 8.2 L5.9 10.9 L11.4 3.6" fill="none" stroke="#2a2f42" stroke-width="2.1"/></svg></div>
<div class="a" style="left:1387px;top:499px;width:16px;height:16px;box-sizing:border-box;border:1px solid #596073;border-radius:2px;box-shadow:inset 0 0 0 1px #f6f7fa,inset 0 0 0 2px #8f95a8;background:linear-gradient(135deg,#c9ccd9 25%,#e9eaf0 75%);"><svg width="14" height="14" viewBox="0 0 14 14" style="position:absolute;left:0;top:0"><path d="M3.2 8.2 L5.9 10.9 L11.4 3.6" fill="none" stroke="#2a2f42" stroke-width="2.1"/></svg></div>
<div class="t" style="left:1479.4px;top:497.1px;font-size:15px;color:#0c0c14;"><span style="transform:scaleX(0.8197);transform-origin:0 50%;">System</span></div>
<div class="t" style="left:1649px;top:497.1px;font-size:15px;color:#0c0c14;"><span style="transform:scaleX(0.8832);transform-origin:0 50%;">Main Location</span></div>
<div class="t" style="left:1774px;top:497.1px;font-size:15px;color:#0c0c14;"><span style="transform:scaleX(0.8394);transform-origin:0 50%;">Editorial</span></div>
<div class="t" style="left:1899.5px;top:497.1px;font-size:15px;color:#0c0c14;"><span style="transform:scaleX(0.8862);transform-origin:0 50%;">Meadowrue Lane ...</span></div>
<div class="t" style="left:2024.3px;top:497.1px;font-size:15px;color:#0c0c14;"><span style="transform:scaleX(0.8621);transform-origin:0 50%;">No Shift</span></div>
<div class="t" style="left:2149.5px;top:497.1px;font-size:15px;color:#0c0c14;"><span style="transform:scaleX(0.8921);transform-origin:0 50%;">Unknown</span></div>
<div class="t" style="left:2274.3px;top:497.1px;font-size:15px;color:#0c0c14;"><span style="transform:scaleX(0.8487);transform-origin:0 50%;">Inserted</span></div>
<div class="a" style="left:370px;top:521px;width:2028px;height:26px;background:#fafafa;"></div>
<div class="a" style="left:1072px;top:521px;width:63px;height:26px;background:#e2e2e2;"></div>
<div class="a" style="left:1136px;top:521px;width:63px;height:26px;background:#e2e2e2;"></div>
<div class="a" style="left:2398px;top:521px;width:166px;height:26px;background:#848484;"></div>
<div class="a" style="left:2398px;top:547px;width:166px;height:1px;background:#b4b7c2;"></div>
<div class="a" style="left:370px;top:542px;width:2028px;height:5px;background:#dadada;"></div>
<div class="a" style="left:1072px;top:542px;width:127px;height:5px;background:#d2d2d2;"></div>
<div class="a" style="left:370px;top:547px;width:2028px;height:1px;background:#c9cdd8;"></div>
<div class="a" style="left:379px;top:524px;width:16px;height:16px;box-sizing:border-box;border:1px solid #596073;border-radius:2px;box-shadow:inset 0 0 0 1px #f6f7fa,inset 0 0 0 2px #8f95a8;background:linear-gradient(135deg,#c9ccd9 25%,#e9eaf0 75%);"><svg width="14" height="14" viewBox="0 0 14 14" style="position:absolute;left:0;top:0"><path d="M3.2 8.2 L5.9 10.9 L11.4 3.6" fill="none" stroke="#2a2f42" stroke-width="2.1"/></svg></div>
<div class="a" style="left:415px;top:524px;width:6px;height:16px;background:#84b4ac;"></div>
<div class="t" style="left:1220.77px;top:521.6px;font-size:15px;color:#0c0c14;"><span style="transform:scaleX(0.8924);transform-origin:100% 50%;">$216.00</span></div>
<div class="t" style="left:1096.45px;top:521.6px;font-size:15px;color:#0c0c14;font-weight:700;"><span style="transform:scaleX(0.9721);transform-origin:100% 50%;">16.00</span></div>
<div class="t" style="left:1192.8px;top:521.6px;font-size:15px;color:#0c0c14;font-weight:700;"><span style="transform:scaleX(1.1400);transform-origin:100% 50%;">-</span></div>
<div class="a" style="left:1312px;top:524px;width:16px;height:16px;box-sizing:border-box;border:1px solid #596073;border-radius:2px;box-shadow:inset 0 0 0 1px #f6f7fa,inset 0 0 0 2px #8f95a8;background:linear-gradient(135deg,#c9ccd9 25%,#e9eaf0 75%);"><svg width="14" height="14" viewBox="0 0 14 14" style="position:absolute;left:0;top:0"><path d="M3.2 8.2 L5.9 10.9 L11.4 3.6" fill="none" stroke="#2a2f42" stroke-width="2.1"/></svg></div>
<div class="a" style="left:1387px;top:524px;width:16px;height:16px;box-sizing:border-box;border:1px solid #596073;border-radius:2px;box-shadow:inset 0 0 0 1px #f6f7fa,inset 0 0 0 2px #8f95a8;background:linear-gradient(135deg,#c9ccd9 25%,#e9eaf0 75%);"><svg width="14" height="14" viewBox="0 0 14 14" style="position:absolute;left:0;top:0"><path d="M3.2 8.2 L5.9 10.9 L11.4 3.6" fill="none" stroke="#2a2f42" stroke-width="2.1"/></svg></div>
<div class="t" style="left:1479.4px;top:521.6px;font-size:15px;color:#0c0c14;"><span style="transform:scaleX(0.8197);transform-origin:0 50%;">System</span></div>
<div class="t" style="left:1649px;top:521.6px;font-size:15px;color:#0c0c14;"><span style="transform:scaleX(0.8832);transform-origin:0 50%;">Main Location</span></div>
<div class="t" style="left:1774px;top:521.6px;font-size:15px;color:#0c0c14;"><span style="transform:scaleX(0.8394);transform-origin:0 50%;">Editorial</span></div>
<div class="t" style="left:1899.5px;top:521.6px;font-size:15px;color:#0c0c14;"><span style="transform:scaleX(0.8862);transform-origin:0 50%;">Meadowrue Lane ...</span></div>
<div class="t" style="left:2024.3px;top:521.6px;font-size:15px;color:#0c0c14;"><span style="transform:scaleX(0.8621);transform-origin:0 50%;">No Shift</span></div>
<div class="t" style="left:2149.5px;top:521.6px;font-size:15px;color:#0c0c14;"><span style="transform:scaleX(0.8921);transform-origin:0 50%;">Unknown</span></div>
<div class="t" style="left:2274.3px;top:521.6px;font-size:15px;color:#0c0c14;"><span style="transform:scaleX(0.8487);transform-origin:0 50%;">Inserted</span></div>
<div class="a" style="left:370px;top:548px;width:2028px;height:27px;background:#fafafa;"></div>
<div class="a" style="left:1072px;top:548px;width:63px;height:27px;background:#e2e2e2;"></div>
<div class="a" style="left:1136px;top:548px;width:63px;height:27px;background:#e2e2e2;"></div>
<div class="a" style="left:2398px;top:548px;width:166px;height:27px;background:#848484;"></div>
<div class="a" style="left:2398px;top:575px;width:166px;height:1px;background:#b4b7c2;"></div>
<div class="a" style="left:370px;top:570px;width:2028px;height:5px;background:#dadada;"></div>
<div class="a" style="left:1072px;top:570px;width:127px;height:5px;background:#d2d2d2;"></div>
<div class="a" style="left:370px;top:575px;width:2028px;height:1px;background:#c9cdd8;"></div>
<div class="a" style="left:379px;top:551px;width:16px;height:16px;box-sizing:border-box;border:1px solid #596073;border-radius:2px;box-shadow:inset 0 0 0 1px #f6f7fa,inset 0 0 0 2px #8f95a8;background:linear-gradient(135deg,#c9ccd9 25%,#e9eaf0 75%);"><svg width="14" height="14" viewBox="0 0 14 14" style="position:absolute;left:0;top:0"><path d="M3.2 8.2 L5.9 10.9 L11.4 3.6" fill="none" stroke="#2a2f42" stroke-width="2.1"/></svg></div>
<div class="a" style="left:415px;top:551px;width:6px;height:16px;background:#ff5a00;"></div>
<div class="t" style="left:1220.77px;top:548.6px;font-size:15px;color:#0c0c14;"><span style="transform:scaleX(0.8924);transform-origin:100% 50%;">$216.00</span></div>
<div class="t" style="left:1104.8px;top:548.6px;font-size:15px;color:#0c0c14;font-weight:700;"><span style="transform:scaleX(0.9691);transform-origin:100% 50%;">8.00</span></div>
<div class="t" style="left:1192.8px;top:548.6px;font-size:15px;color:#0c0c14;font-weight:700;"><span style="transform:scaleX(1.1400);transform-origin:100% 50%;">-</span></div>
<div class="a" style="left:1312px;top:551px;width:16px;height:16px;box-sizing:border-box;border:1px solid #596073;border-radius:2px;box-shadow:inset 0 0 0 1px #f6f7fa,inset 0 0 0 2px #8f95a8;background:linear-gradient(135deg,#c9ccd9 25%,#e9eaf0 75%);"><svg width="14" height="14" viewBox="0 0 14 14" style="position:absolute;left:0;top:0"><path d="M3.2 8.2 L5.9 10.9 L11.4 3.6" fill="none" stroke="#2a2f42" stroke-width="2.1"/></svg></div>
<div class="a" style="left:1387px;top:551px;width:16px;height:16px;box-sizing:border-box;border:1px solid #596073;border-radius:2px;box-shadow:inset 0 0 0 1px #f6f7fa,inset 0 0 0 2px #8f95a8;background:linear-gradient(135deg,#c9ccd9 25%,#e9eaf0 75%);"></div>
<div class="t" style="left:1479.4px;top:548.6px;font-size:15px;color:#0c0c14;"><span style="transform:scaleX(0.8197);transform-origin:0 50%;">System</span></div>
<div class="t" style="left:1649px;top:548.6px;font-size:15px;color:#0c0c14;"><span style="transform:scaleX(0.8832);transform-origin:0 50%;">Main Location</span></div>
<div class="t" style="left:1774px;top:548.6px;font-size:15px;color:#0c0c14;"><span style="transform:scaleX(0.8394);transform-origin:0 50%;">Editorial</span></div>
<div class="t" style="left:1899.5px;top:548.6px;font-size:15px;color:#0c0c14;"><span style="transform:scaleX(0.8862);transform-origin:0 50%;">Meadowrue Lane ...</span></div>
<div class="t" style="left:2024.3px;top:548.6px;font-size:15px;color:#0c0c14;"><span style="transform:scaleX(0.8621);transform-origin:0 50%;">No Shift</span></div>
<div class="t" style="left:2149.5px;top:548.6px;font-size:15px;color:#0c0c14;"><span style="transform:scaleX(0.8921);transform-origin:0 50%;">Unknown</span></div>
<div class="t" style="left:2274.3px;top:548.6px;font-size:15px;color:#0c0c14;"><span style="transform:scaleX(0.8487);transform-origin:0 50%;">Inserted</span></div>
<div class="a" style="left:370px;top:576px;width:2028px;height:26px;background:#fafafa;"></div>
<div class="a" style="left:1072px;top:576px;width:63px;height:26px;background:#e2e2e2;"></div>
<div class="a" style="left:1136px;top:576px;width:63px;height:26px;background:#e2e2e2;"></div>
<div class="a" style="left:2398px;top:576px;width:166px;height:26px;background:#848484;"></div>
<div class="a" style="left:2398px;top:602px;width:166px;height:1px;background:#b4b7c2;"></div>
<div class="a" style="left:370px;top:597px;width:2028px;height:5px;background:#dadada;"></div>
<div class="a" style="left:1072px;top:597px;width:127px;height:5px;background:#d2d2d2;"></div>
<div class="a" style="left:370px;top:602px;width:2028px;height:1px;background:#c9cdd8;"></div>
<div class="a" style="left:379px;top:579px;width:16px;height:16px;box-sizing:border-box;border:1px solid #596073;border-radius:2px;box-shadow:inset 0 0 0 1px #f6f7fa,inset 0 0 0 2px #8f95a8;background:linear-gradient(135deg,#c9ccd9 25%,#e9eaf0 75%);"><svg width="14" height="14" viewBox="0 0 14 14" style="position:absolute;left:0;top:0"><path d="M3.2 8.2 L5.9 10.9 L11.4 3.6" fill="none" stroke="#2a2f42" stroke-width="2.1"/></svg></div>
<div class="a" style="left:415px;top:579px;width:6px;height:16px;background:#ff5a00;"></div>
<div class="t" style="left:1220.77px;top:576.6px;font-size:15px;color:#0c0c14;"><span style="transform:scaleX(0.8924);transform-origin:100% 50%;">$216.00</span></div>
<div class="t" style="left:1104.8px;top:576.6px;font-size:15px;color:#0c0c14;font-weight:700;"><span style="transform:scaleX(0.9691);transform-origin:100% 50%;">8.00</span></div>
<div class="t" style="left:1192.8px;top:576.6px;font-size:15px;color:#0c0c14;font-weight:700;"><span style="transform:scaleX(1.1400);transform-origin:100% 50%;">-</span></div>
<div class="a" style="left:1312px;top:579px;width:16px;height:16px;box-sizing:border-box;border:1px solid #596073;border-radius:2px;box-shadow:inset 0 0 0 1px #f6f7fa,inset 0 0 0 2px #8f95a8;background:linear-gradient(135deg,#c9ccd9 25%,#e9eaf0 75%);"><svg width="14" height="14" viewBox="0 0 14 14" style="position:absolute;left:0;top:0"><path d="M3.2 8.2 L5.9 10.9 L11.4 3.6" fill="none" stroke="#2a2f42" stroke-width="2.1"/></svg></div>
<div class="a" style="left:1387px;top:579px;width:16px;height:16px;box-sizing:border-box;border:1px solid #596073;border-radius:2px;box-shadow:inset 0 0 0 1px #f6f7fa,inset 0 0 0 2px #8f95a8;background:linear-gradient(135deg,#c9ccd9 25%,#e9eaf0 75%);"></div>
<div class="t" style="left:1479.4px;top:576.6px;font-size:15px;color:#0c0c14;"><span style="transform:scaleX(0.8197);transform-origin:0 50%;">System</span></div>
<div class="t" style="left:1649px;top:576.6px;font-size:15px;color:#0c0c14;"><span style="transform:scaleX(0.8832);transform-origin:0 50%;">Main Location</span></div>
<div class="t" style="left:1774px;top:576.6px;font-size:15px;color:#0c0c14;"><span style="transform:scaleX(0.8394);transform-origin:0 50%;">Editorial</span></div>
<div class="t" style="left:1899.5px;top:576.6px;font-size:15px;color:#0c0c14;"><span style="transform:scaleX(0.8862);transform-origin:0 50%;">Meadowrue Lane ...</span></div>
<div class="t" style="left:2024.3px;top:576.6px;font-size:15px;color:#0c0c14;"><span style="transform:scaleX(0.8621);transform-origin:0 50%;">No Shift</span></div>
<div class="t" style="left:2149.5px;top:576.6px;font-size:15px;color:#0c0c14;"><span style="transform:scaleX(0.8921);transform-origin:0 50%;">Unknown</span></div>
<div class="t" style="left:2274.3px;top:576.6px;font-size:15px;color:#0c0c14;"><span style="transform:scaleX(0.8487);transform-origin:0 50%;">Inserted</span></div>
<div class="a" style="left:370px;top:603px;width:2028px;height:27px;background:#fafafa;"></div>
<div class="a" style="left:1072px;top:603px;width:63px;height:27px;background:#e2e2e2;"></div>
<div class="a" style="left:1136px;top:603px;width:63px;height:27px;background:#e2e2e2;"></div>
<div class="a" style="left:2398px;top:603px;width:166px;height:27px;background:#848484;"></div>
<div class="a" style="left:2398px;top:630px;width:166px;height:1px;background:#b4b7c2;"></div>
<div class="a" style="left:370px;top:630px;width:2028px;height:1px;background:#c9cdd8;"></div>
<div class="a" style="left:379px;top:609px;width:16px;height:16px;box-sizing:border-box;border:1px solid #596073;border-radius:2px;box-shadow:inset 0 0 0 1px #f6f7fa,inset 0 0 0 2px #8f95a8;background:linear-gradient(135deg,#c9ccd9 25%,#e9eaf0 75%);"><svg width="14" height="14" viewBox="0 0 14 14" style="position:absolute;left:0;top:0"><path d="M3.2 8.2 L5.9 10.9 L11.4 3.6" fill="none" stroke="#2a2f42" stroke-width="2.1"/></svg></div>
<div class="a" style="left:415px;top:609px;width:6px;height:16px;background:#ff5a00;"></div>
<div class="t" style="left:1270px;top:607.1px;font-size:15px;color:#0c0c14;"><span style="transform:scaleX(0.8600);transform-origin:100% 50%;">-</span></div>
<div class="t" style="left:1129px;top:607.1px;font-size:15px;color:#0c0c14;font-weight:700;"><span style="transform:scaleX(1.1400);transform-origin:100% 50%;">-</span></div>
<div class="t" style="left:1192.8px;top:607.1px;font-size:15px;color:#0c0c14;font-weight:700;"><span style="transform:scaleX(1.1400);transform-origin:100% 50%;">-</span></div>
<div class="a" style="left:1312px;top:609px;width:16px;height:16px;box-sizing:border-box;border:1px solid #596073;border-radius:2px;box-shadow:inset 0 0 0 1px #f6f7fa,inset 0 0 0 2px #8f95a8;background:linear-gradient(135deg,#c9ccd9 25%,#e9eaf0 75%);"><svg width="14" height="14" viewBox="0 0 14 14" style="position:absolute;left:0;top:0"><path d="M3.2 8.2 L5.9 10.9 L11.4 3.6" fill="none" stroke="#2a2f42" stroke-width="2.1"/></svg></div>
<div class="a" style="left:1387px;top:609px;width:16px;height:16px;box-sizing:border-box;border:1px solid #596073;border-radius:2px;box-shadow:inset 0 0 0 1px #f6f7fa,inset 0 0 0 2px #8f95a8;background:linear-gradient(135deg,#c9ccd9 25%,#e9eaf0 75%);"></div>
<div class="t" style="left:1479.4px;top:607.1px;font-size:15px;color:#0c0c14;"><span style="transform:scaleX(0.8197);transform-origin:0 50%;">System</span></div>
<div class="t" style="left:1649px;top:607.1px;font-size:15px;color:#0c0c14;"><span style="transform:scaleX(0.8832);transform-origin:0 50%;">Main Location</span></div>
<div class="t" style="left:1774px;top:607.1px;font-size:15px;color:#0c0c14;"><span style="transform:scaleX(0.8394);transform-origin:0 50%;">Editorial</span></div>
<div class="t" style="left:1899.5px;top:607.1px;font-size:15px;color:#0c0c14;"><span style="transform:scaleX(0.8862);transform-origin:0 50%;">Meadowrue Lane ...</span></div>
<div class="t" style="left:2024.3px;top:607.1px;font-size:15px;color:#0c0c14;"><span style="transform:scaleX(0.8621);transform-origin:0 50%;">No Shift</span></div>
<div class="t" style="left:2149.5px;top:607.1px;font-size:15px;color:#0c0c14;"><span style="transform:scaleX(0.8921);transform-origin:0 50%;">Unknown</span></div>
<div class="t" style="left:2274.3px;top:607.1px;font-size:15px;color:#0c0c14;"><span style="transform:scaleX(0.8487);transform-origin:0 50%;">Inserted</span></div>
<div class="a" style="left:370px;top:631px;width:2028px;height:26px;background:#fafafa;"></div>
<div class="a" style="left:1072px;top:631px;width:63px;height:26px;background:#e2e2e2;"></div>
<div class="a" style="left:1136px;top:631px;width:63px;height:26px;background:#e2e2e2;"></div>
<div class="a" style="left:2398px;top:631px;width:166px;height:26px;background:#848484;"></div>
<div class="a" style="left:2398px;top:657px;width:166px;height:1px;background:#b4b7c2;"></div>
<div class="a" style="left:370px;top:657px;width:2028px;height:1px;background:#c9cdd8;"></div>
<div class="a" style="left:379px;top:637px;width:16px;height:16px;box-sizing:border-box;border:1px solid #596073;border-radius:2px;box-shadow:inset 0 0 0 1px #f6f7fa,inset 0 0 0 2px #8f95a8;background:linear-gradient(135deg,#c9ccd9 25%,#e9eaf0 75%);"><svg width="14" height="14" viewBox="0 0 14 14" style="position:absolute;left:0;top:0"><path d="M3.2 8.2 L5.9 10.9 L11.4 3.6" fill="none" stroke="#2a2f42" stroke-width="2.1"/></svg></div>
<div class="a" style="left:415px;top:637px;width:6px;height:16px;background:#ff5a00;"></div>
<div class="t" style="left:1220.77px;top:635.1px;font-size:15px;color:#0c0c14;"><span style="transform:scaleX(0.8924);transform-origin:100% 50%;">$432.00</span></div>
<div class="t" style="left:1096.45px;top:635.1px;font-size:15px;color:#0c0c14;font-weight:700;"><span style="transform:scaleX(0.9721);transform-origin:100% 50%;">16.00</span></div>
<div class="t" style="left:1192.8px;top:635.1px;font-size:15px;color:#0c0c14;font-weight:700;"><span style="transform:scaleX(1.1400);transform-origin:100% 50%;">-</span></div>
<div class="a" style="left:1312px;top:637px;width:16px;height:16px;box-sizing:border-box;border:1px solid #596073;border-radius:2px;box-shadow:inset 0 0 0 1px #f6f7fa,inset 0 0 0 2px #8f95a8;background:linear-gradient(135deg,#c9ccd9 25%,#e9eaf0 75%);"><svg width="14" height="14" viewBox="0 0 14 14" style="position:absolute;left:0;top:0"><path d="M3.2 8.2 L5.9 10.9 L11.4 3.6" fill="none" stroke="#2a2f42" stroke-width="2.1"/></svg></div>
<div class="a" style="left:1387px;top:637px;width:16px;height:16px;box-sizing:border-box;border:1px solid #596073;border-radius:2px;box-shadow:inset 0 0 0 1px #f6f7fa,inset 0 0 0 2px #8f95a8;background:linear-gradient(135deg,#c9ccd9 25%,#e9eaf0 75%);"></div>
<div class="t" style="left:1479.4px;top:635.1px;font-size:15px;color:#0c0c14;"><span style="transform:scaleX(0.8197);transform-origin:0 50%;">System</span></div>
<div class="t" style="left:1649px;top:635.1px;font-size:15px;color:#0c0c14;"><span style="transform:scaleX(0.8832);transform-origin:0 50%;">Main Location</span></div>
<div class="t" style="left:1774px;top:635.1px;font-size:15px;color:#0c0c14;"><span style="transform:scaleX(0.8394);transform-origin:0 50%;">Editorial</span></div>
<div class="t" style="left:1899.5px;top:635.1px;font-size:15px;color:#0c0c14;"><span style="transform:scaleX(0.8862);transform-origin:0 50%;">Meadowrue Lane ...</span></div>
<div class="t" style="left:2024.3px;top:635.1px;font-size:15px;color:#0c0c14;"><span style="transform:scaleX(0.8621);transform-origin:0 50%;">No Shift</span></div>
<div class="t" style="left:2149.5px;top:635.1px;font-size:15px;color:#0c0c14;"><span style="transform:scaleX(0.8921);transform-origin:0 50%;">Unknown</span></div>
<div class="t" style="left:2274.3px;top:635.1px;font-size:15px;color:#0c0c14;"><span style="transform:scaleX(0.8487);transform-origin:0 50%;">Inserted</span></div>
<div class="a" style="left:404px;top:487px;width:5px;height:5px;background:#fafafa;"></div>
<div class="a" style="left:404px;top:542px;width:5px;height:5px;background:#fafafa;"></div>
<div class="a" style="left:404px;top:570px;width:5px;height:5px;background:#fafafa;"></div>
<div class="a" style="left:404px;top:597px;width:5px;height:5px;background:#fafafa;"></div>
<div class="a" style="left:406px;top:218px;width:1px;height:440px;background:#c9cdd8;"></div>
<div class="a" style="left:435px;top:487px;width:5px;height:5px;background:#fafafa;"></div>
<div class="a" style="left:435px;top:542px;width:5px;height:5px;background:#fafafa;"></div>
<div class="a" style="left:435px;top:570px;width:5px;height:5px;background:#fafafa;"></div>
<div class="a" style="left:435px;top:597px;width:5px;height:5px;background:#fafafa;"></div>
<div class="a" style="left:437px;top:218px;width:1px;height:440px;background:#c9cdd8;"></div>
<div class="a" style="left:560px;top:487px;width:5px;height:5px;background:#fafafa;"></div>
<div class="a" style="left:560px;top:542px;width:5px;height:5px;background:#fafafa;"></div>
<div class="a" style="left:560px;top:570px;width:5px;height:5px;background:#fafafa;"></div>
<div class="a" style="left:560px;top:597px;width:5px;height:5px;background:#fafafa;"></div>
<div class="a" style="left:562px;top:218px;width:1px;height:440px;background:#c9cdd8;"></div>
<div class="a" style="left:604px;top:487px;width:5px;height:5px;background:#fafafa;"></div>
<div class="a" style="left:604px;top:542px;width:5px;height:5px;background:#fafafa;"></div>
<div class="a" style="left:604px;top:570px;width:5px;height:5px;background:#fafafa;"></div>
<div class="a" style="left:604px;top:597px;width:5px;height:5px;background:#fafafa;"></div>
<div class="a" style="left:606px;top:218px;width:1px;height:440px;background:#c9cdd8;"></div>
<div class="a" style="left:669px;top:487px;width:5px;height:5px;background:#fafafa;"></div>
<div class="a" style="left:669px;top:542px;width:5px;height:5px;background:#fafafa;"></div>
<div class="a" style="left:669px;top:570px;width:5px;height:5px;background:#fafafa;"></div>
<div class="a" style="left:669px;top:597px;width:5px;height:5px;background:#fafafa;"></div>
<div class="a" style="left:671px;top:218px;width:1px;height:440px;background:#c9cdd8;"></div>
<div class="a" style="left:742px;top:487px;width:5px;height:5px;background:#fafafa;"></div>
<div class="a" style="left:742px;top:542px;width:5px;height:5px;background:#fafafa;"></div>
<div class="a" style="left:742px;top:570px;width:5px;height:5px;background:#fafafa;"></div>
<div class="a" style="left:742px;top:597px;width:5px;height:5px;background:#fafafa;"></div>
<div class="a" style="left:744px;top:218px;width:1px;height:440px;background:#c9cdd8;"></div>
<div class="a" style="left:810px;top:487px;width:5px;height:5px;background:#fafafa;"></div>
<div class="a" style="left:810px;top:542px;width:5px;height:5px;background:#fafafa;"></div>
<div class="a" style="left:810px;top:570px;width:5px;height:5px;background:#fafafa;"></div>
<div class="a" style="left:810px;top:597px;width:5px;height:5px;background:#fafafa;"></div>
<div class="a" style="left:812px;top:218px;width:1px;height:440px;background:#c9cdd8;"></div>
<div class="a" style="left:881px;top:487px;width:5px;height:5px;background:#fafafa;"></div>
<div class="a" style="left:881px;top:542px;width:5px;height:5px;background:#fafafa;"></div>
<div class="a" style="left:881px;top:570px;width:5px;height:5px;background:#fafafa;"></div>
<div class="a" style="left:881px;top:597px;width:5px;height:5px;background:#fafafa;"></div>
<div class="a" style="left:883px;top:218px;width:1px;height:440px;background:#c9cdd8;"></div>
<div class="a" style="left:946px;top:487px;width:5px;height:5px;background:#fafafa;"></div>
<div class="a" style="left:946px;top:542px;width:5px;height:5px;background:#fafafa;"></div>
<div class="a" style="left:946px;top:570px;width:5px;height:5px;background:#fafafa;"></div>
<div class="a" style="left:946px;top:597px;width:5px;height:5px;background:#fafafa;"></div>
<div class="a" style="left:948px;top:218px;width:1px;height:440px;background:#c9cdd8;"></div>
<div class="a" style="left:1026px;top:487px;width:5px;height:5px;background:#fafafa;"></div>
<div class="a" style="left:1026px;top:542px;width:5px;height:5px;background:#fafafa;"></div>
<div class="a" style="left:1026px;top:570px;width:5px;height:5px;background:#fafafa;"></div>
<div class="a" style="left:1026px;top:597px;width:5px;height:5px;background:#fafafa;"></div>
<div class="a" style="left:1028px;top:218px;width:1px;height:440px;background:#c9cdd8;"></div>
<div class="a" style="left:1071px;top:218px;width:1px;height:440px;background:#c9cdd8;"></div>
<div class="a" style="left:1135px;top:218px;width:1px;height:440px;background:#c9cdd8;"></div>
<div class="a" style="left:1199px;top:218px;width:1px;height:440px;background:#c9cdd8;"></div>
<div class="a" style="left:1282px;top:487px;width:5px;height:5px;background:#fafafa;"></div>
<div class="a" style="left:1282px;top:542px;width:5px;height:5px;background:#fafafa;"></div>
<div class="a" style="left:1282px;top:570px;width:5px;height:5px;background:#fafafa;"></div>
<div class="a" style="left:1282px;top:597px;width:5px;height:5px;background:#fafafa;"></div>
<div class="a" style="left:1284px;top:218px;width:1px;height:440px;background:#c9cdd8;"></div>
<div class="a" style="left:1353px;top:487px;width:5px;height:5px;background:#fafafa;"></div>
<div class="a" style="left:1353px;top:542px;width:5px;height:5px;background:#fafafa;"></div>
<div class="a" style="left:1353px;top:570px;width:5px;height:5px;background:#fafafa;"></div>
<div class="a" style="left:1353px;top:597px;width:5px;height:5px;background:#fafafa;"></div>
<div class="a" style="left:1355px;top:218px;width:1px;height:440px;background:#c9cdd8;"></div>
<div class="a" style="left:1431px;top:487px;width:5px;height:5px;background:#fafafa;"></div>
<div class="a" style="left:1431px;top:542px;width:5px;height:5px;background:#fafafa;"></div>
<div class="a" style="left:1431px;top:570px;width:5px;height:5px;background:#fafafa;"></div>
<div class="a" style="left:1431px;top:597px;width:5px;height:5px;background:#fafafa;"></div>
<div class="a" style="left:1433px;top:218px;width:1px;height:440px;background:#c9cdd8;"></div>
<div class="a" style="left:1474px;top:487px;width:5px;height:5px;background:#fafafa;"></div>
<div class="a" style="left:1474px;top:542px;width:5px;height:5px;background:#fafafa;"></div>
<div class="a" style="left:1474px;top:570px;width:5px;height:5px;background:#fafafa;"></div>
<div class="a" style="left:1474px;top:597px;width:5px;height:5px;background:#fafafa;"></div>
<div class="a" style="left:1476px;top:218px;width:1px;height:440px;background:#c9cdd8;"></div>
<div class="a" style="left:1599px;top:487px;width:5px;height:5px;background:#fafafa;"></div>
<div class="a" style="left:1599px;top:542px;width:5px;height:5px;background:#fafafa;"></div>
<div class="a" style="left:1599px;top:570px;width:5px;height:5px;background:#fafafa;"></div>
<div class="a" style="left:1599px;top:597px;width:5px;height:5px;background:#fafafa;"></div>
<div class="a" style="left:1601px;top:218px;width:1px;height:440px;background:#c9cdd8;"></div>
<div class="a" style="left:1644px;top:487px;width:5px;height:5px;background:#fafafa;"></div>
<div class="a" style="left:1644px;top:542px;width:5px;height:5px;background:#fafafa;"></div>
<div class="a" style="left:1644px;top:570px;width:5px;height:5px;background:#fafafa;"></div>
<div class="a" style="left:1644px;top:597px;width:5px;height:5px;background:#fafafa;"></div>
<div class="a" style="left:1646px;top:218px;width:1px;height:440px;background:#c9cdd8;"></div>
<div class="a" style="left:1769px;top:487px;width:5px;height:5px;background:#fafafa;"></div>
<div class="a" style="left:1769px;top:542px;width:5px;height:5px;background:#fafafa;"></div>
<div class="a" style="left:1769px;top:570px;width:5px;height:5px;background:#fafafa;"></div>
<div class="a" style="left:1769px;top:597px;width:5px;height:5px;background:#fafafa;"></div>
<div class="a" style="left:1771px;top:218px;width:1px;height:440px;background:#c9cdd8;"></div>
<div class="a" style="left:1894px;top:487px;width:5px;height:5px;background:#fafafa;"></div>
<div class="a" style="left:1894px;top:542px;width:5px;height:5px;background:#fafafa;"></div>
<div class="a" style="left:1894px;top:570px;width:5px;height:5px;background:#fafafa;"></div>
<div class="a" style="left:1894px;top:597px;width:5px;height:5px;background:#fafafa;"></div>
<div class="a" style="left:1896px;top:218px;width:1px;height:440px;background:#c9cdd8;"></div>
<div class="a" style="left:2019px;top:487px;width:5px;height:5px;background:#fafafa;"></div>
<div class="a" style="left:2019px;top:542px;width:5px;height:5px;background:#fafafa;"></div>
<div class="a" style="left:2019px;top:570px;width:5px;height:5px;background:#fafafa;"></div>
<div class="a" style="left:2019px;top:597px;width:5px;height:5px;background:#fafafa;"></div>
<div class="a" style="left:2021px;top:218px;width:1px;height:440px;background:#c9cdd8;"></div>
<div class="a" style="left:2144px;top:487px;width:5px;height:5px;background:#fafafa;"></div>
<div class="a" style="left:2144px;top:542px;width:5px;height:5px;background:#fafafa;"></div>
<div class="a" style="left:2144px;top:570px;width:5px;height:5px;background:#fafafa;"></div>
<div class="a" style="left:2144px;top:597px;width:5px;height:5px;background:#fafafa;"></div>
<div class="a" style="left:2146px;top:218px;width:1px;height:440px;background:#c9cdd8;"></div>
<div class="a" style="left:2269px;top:487px;width:5px;height:5px;background:#fafafa;"></div>
<div class="a" style="left:2269px;top:542px;width:5px;height:5px;background:#fafafa;"></div>
<div class="a" style="left:2269px;top:570px;width:5px;height:5px;background:#fafafa;"></div>
<div class="a" style="left:2269px;top:597px;width:5px;height:5px;background:#fafafa;"></div>
<div class="a" style="left:2271px;top:218px;width:1px;height:440px;background:#c9cdd8;"></div>
<div class="a" style="left:2395px;top:487px;width:3px;height:5px;background:#fafafa;"></div>
<div class="a" style="left:2395px;top:542px;width:3px;height:5px;background:#fafafa;"></div>
<div class="a" style="left:2395px;top:570px;width:3px;height:5px;background:#fafafa;"></div>
<div class="a" style="left:2395px;top:597px;width:3px;height:5px;background:#fafafa;"></div>
<div class="a" style="left:2397px;top:218px;width:1px;height:440px;background:#c9cdd8;"></div>
</section>
<footer class="statusbar">
<div class="a" style="left:160px;top:1366px;width:2404px;height:24px;background:#ebf6f8;"></div>
<div class="a" style="left:160px;top:1388px;width:2404px;height:2px;background:#e6ebf8;"></div>
<div class="a" style="left:2563px;top:658px;width:1px;height:732px;background:#cfcfd2;"></div>
<div class="a" style="left:5px;top:1366px;width:155px;height:24px;background:#e0e9f5;"></div>
</footer><section class="dialog" role="dialog" aria-label="Insert Transaction">
<div class="a" style="left:420px;top:374px;width:650px;height:800px;background:#0f6fc8;"></div>
<div class="a" style="left:421px;top:375px;width:648px;height:37px;background:#363748;"></div>
<div class="a" style="left:424px;top:412px;width:643px;height:758px;background:#f8f8f8;"></div>
<svg class="a" style="left:428px;top:380px;" width="24" height="24" viewBox="0 0 24 24"><defs><linearGradient id="cg" x1="0" y1="0" x2="0" y2="1"><stop offset="0" stop-color="#cc6a62"/><stop offset="1" stop-color="#a8262a"/></linearGradient></defs><circle cx="12" cy="11.6" r="9.3" fill="none" stroke="url(#cg)" stroke-width="2.1"/><path d="M11.6 11.8 L15.6 8.4 M11.6 11.8 L13.8 14.4" stroke="#c8524e" stroke-width="1.3" fill="none"/></svg>
<div class="a" style="left:421px;top:410px;width:648px;height:2px;background:#2c2d3d;"></div>
<svg class="a" style="left:1038px;top:388px;" width="14" height="13" viewBox="0 0 14 13"><path d="M2 2 L11.5 10.5 M11.5 2 L2 10.5" stroke="#e8e8ee" stroke-width="2.2"/></svg>
<div class="t" style="left:647px;top:424.6px;font-size:22.5px;color:#0d7d18;font-weight:700;"><span style="transform:scaleX(1.0242);transform-origin:0 50%;">Insert Transaction</span></div>
<div class="t" style="left:470.4px;top:473.18px;font-size:16.5px;color:#0b0b12;font-weight:700;"><span style="transform:scaleX(0.9593);transform-origin:0 50%;">Kennedy, John F.</span></div>
<div class="a" style="left:486px;top:520px;width:17px;height:17px;background:#fdfdfd;border:1.5px solid #4a4a4a;border-radius:50%;box-sizing:border-box;"></div>
<div class="t" style="left:510.2px;top:519.15px;font-size:14px;color:#15121e;"><span style="transform:scaleX(0.9643);transform-origin:0 50%;">IN</span></div>
<div class="a" style="left:562px;top:520px;width:17px;height:17px;background:#fdfdfd;border:1.5px solid #4a4a4a;border-radius:50%;box-sizing:border-box;"></div>
<div class="a" style="left:566px;top:524px;width:9px;height:9px;background:#2e2e2e;border-radius:50%;"></div>
<div class="t" style="left:586.7px;top:519.15px;font-size:14px;color:#15121e;"><span style="transform:scaleX(0.9336);transform-origin:0 50%;">OUT</span></div>
<div class="t" style="left:479px;top:559.45px;font-size:14px;color:#15121e;"><span style="transform:scaleX(0.9860);transform-origin:0 50%;">Date:</span></div>
<div class="a" style="left:479px;top:580px;width:211px;height:28px;background:#f9f9f9;border:1px solid #2b2b2b;box-sizing:border-box;box-shadow:0 1px 0 #8a8a8a;"></div>
<div class="a" style="left:668px;top:583px;width:19px;height:22px;box-sizing:border-box;border:1px solid #7e8596;box-shadow:inset 0 0 0 1px #d9dce6;background:linear-gradient(#d4d7e0,#a9adba 55%,#b9bcc8);"></div>
<svg class="a" style="left:673px;top:592.5px;" width="9" height="6" viewBox="0 0 9 6"><path d="M0.5 0.5 H8.5 L4.5 5 Z" fill="#111"/></svg>
<div class="t" style="left:481.5px;top:583.75px;font-size:14px;color:#14121c;"><span style="transform:scaleX(0.9892);transform-origin:0 50%;">Monday, May &nbsp;2, 2022</span></div>
<div class="t" style="left:786.3px;top:559.45px;font-size:14px;color:#15121e;"><span style="transform:scaleX(0.9715);transform-origin:0 50%;">Time:</span></div>
<div class="a" style="left:787px;top:580px;width:127px;height:28px;background:#f9f9f9;border:1px solid #2b2b2b;box-sizing:border-box;box-shadow:0 1px 0 #8a8a8a;"></div>
<div class="a" style="left:892px;top:583px;width:19px;height:22px;box-sizing:border-box;border:1px solid #7e8596;box-shadow:inset 0 0 0 1px #d9dce6;background:linear-gradient(#d4d7e0,#a9adba 55%,#b9bcc8);"></div>
<svg class="a" style="left:897px;top:592.5px;" width="9" height="6" viewBox="0 0 9 6"><path d="M0.5 0.5 H8.5 L4.5 5 Z" fill="#111"/></svg>
<div class="t" style="left:789.8px;top:583.75px;font-size:14px;color:#14121c;"><span style="transform:scaleX(0.9281);transform-origin:0 50%;">6:32 &nbsp;PM</span></div>
<div class="a" style="left:480px;top:650px;width:65px;height:24px;background:#e1e1e1;border:2px solid #0a78d6;box-sizing:border-box;"></div>
<div class="t" style="left:492.3px;top:652.53px;font-size:10px;color:#1a1a22;"><span style="transform:scaleX(1.0817);transform-origin:0 50%;">Less &lt;&lt;</span></div>
<div class="t" style="left:479px;top:694.15px;font-size:14px;color:#15121e;"><span style="transform:scaleX(1.0206);transform-origin:0 50%;">Location:</span></div>
<div class="a" style="left:479px;top:717px;width:211px;height:28px;background:#f9f9f9;border:1px solid #2b2b2b;box-sizing:border-box;box-shadow:0 1px 0 #8a8a8a;"></div>
<div class="a" style="left:668px;top:720px;width:19px;height:22px;box-sizing:border-box;border:1px solid #7e8596;box-shadow:inset 0 0 0 1px #d9dce6;background:linear-gradient(#d4d7e0,#a9adba 55%,#b9bcc8);"></div>
<svg class="a" style="left:673px;top:729.5px;" width="9" height="6" viewBox="0 0 9 6"><path d="M0.5 0.5 H8.5 L4.5 5 Z" fill="#111"/></svg>
<div class="t" style="left:482.6px;top:720.75px;font-size:14px;color:#14121c;"><span style="transform:scaleX(1.0152);transform-origin:0 50%;">Main Location</span></div>
<div class="t" style="left:787.7px;top:694.15px;font-size:14px;color:#15121e;"><span style="transform:scaleX(1.0343);transform-origin:0 50%;">Shift:</span></div>
<div class="a" style="left:789px;top:715.5px;width:210px;height:28px;background:#f9f9f9;border:1px solid #2b2b2b;box-sizing:border-box;box-shadow:0 1px 0 #8a8a8a;"></div>
<div class="a" style="left:977px;top:718.5px;width:19px;height:22px;box-sizing:border-box;border:1px solid #7e8596;box-shadow:inset 0 0 0 1px #d9dce6;background:linear-gradient(#d4d7e0,#a9adba 55%,#b9bcc8);"></div>
<svg class="a" style="left:982px;top:728.0px;" width="9" height="6" viewBox="0 0 9 6"><path d="M0.5 0.5 H8.5 L4.5 5 Z" fill="#111"/></svg>
<div class="t" style="left:792.6px;top:719.25px;font-size:14px;color:#14121c;"><span>No Shift</span></div>
<div class="t" style="left:479px;top:757.75px;font-size:14px;color:#15121e;"><span style="transform:scaleX(1.0052);transform-origin:0 50%;">Jobsite:</span></div>
<div class="a" style="left:479px;top:779.3px;width:211px;height:28px;background:#f9f9f9;border:1px solid #2b2b2b;box-sizing:border-box;box-shadow:0 1px 0 #8a8a8a;"></div>
<div class="a" style="left:668px;top:782.3px;width:19px;height:22px;box-sizing:border-box;border:1px solid #7e8596;box-shadow:inset 0 0 0 1px #d9dce6;background:linear-gradient(#d4d7e0,#a9adba 55%,#b9bcc8);"></div>
<svg class="a" style="left:673px;top:791.8px;" width="9" height="6" viewBox="0 0 9 6"><path d="M0.5 0.5 H8.5 L4.5 5 Z" fill="#111"/></svg>
<div class="t" style="left:482.6px;top:783.05px;font-size:14px;color:#14121c;"><span style="transform:scaleX(1.0193);transform-origin:0 50%;">Unknown</span></div>
<div class="t" style="left:787.7px;top:757.75px;font-size:14px;color:#15121e;"><span style="transform:scaleX(1.0318);transform-origin:0 50%;">Department:</span></div>
<div class="a" style="left:790px;top:779.3px;width:210px;height:28px;background:#f9f9f9;border:1px solid #2b2b2b;box-sizing:border-box;box-shadow:0 1px 0 #8a8a8a;"></div>
<div class="a" style="left:978px;top:782.3px;width:19px;height:22px;box-sizing:border-box;border:1px solid #7e8596;box-shadow:inset 0 0 0 1px #d9dce6;background:linear-gradient(#d4d7e0,#a9adba 55%,#b9bcc8);"></div>
<svg class="a" style="left:983px;top:791.8px;" width="9" height="6" viewBox="0 0 9 6"><path d="M0.5 0.5 H8.5 L4.5 5 Z" fill="#111"/></svg>
<div class="t" style="left:794px;top:783.05px;font-size:14px;color:#14121c;"><span style="transform:scaleX(1.0080);transform-origin:0 50%;">Editorial</span></div>
<div class="t" style="left:791.8px;top:823.15px;font-size:14px;color:#15121e;"><span style="transform:scaleX(0.9873);transform-origin:0 50%;">Company:</span></div>
<div class="a" style="left:792.3px;top:844.6px;width:210px;height:28px;background:#f9f9f9;border:1px solid #2b2b2b;box-sizing:border-box;box-shadow:0 1px 0 #8a8a8a;"></div>
<div class="a" style="left:980.3px;top:847.6px;width:19px;height:22px;box-sizing:border-box;border:1px solid #7e8596;box-shadow:inset 0 0 0 1px #d9dce6;background:linear-gradient(#d4d7e0,#a9adba 55%,#b9bcc8);"></div>
<svg class="a" style="left:985.3px;top:857.1px;" width="9" height="6" viewBox="0 0 9 6"><path d="M0.5 0.5 H8.5 L4.5 5 Z" fill="#111"/></svg>
<div class="t" style="left:796.4px;top:848.35px;font-size:14px;color:#14121c;"><span style="transform:scaleX(0.9609);transform-origin:0 50%;">Meadowrue Lane Associates</span></div>
<div class="a" style="left:482px;top:845.5px;width:17px;height:17px;background:#fdfdfd;border:1px solid #3c3c3c;box-sizing:border-box;"></div>
<div class="t" style="left:506.5px;top:844.45px;font-size:14px;color:#15121e;"><span style="transform:scaleX(1.0520);transform-origin:0 50%;">Do not apply Auto Lunch</span></div>
<div class="t" style="left:484px;top:888.15px;font-size:14px;color:#15121e;"><span style="transform:scaleX(1.0296);transform-origin:0 50%;">Adjust Transaction Total by</span></div>
<div class="a" style="left:665px;top:886.5px;width:64px;height:26.5px;background:#f9f9f9;border:1px solid #b4b4b4;box-sizing:border-box;"></div>
<div class="t" style="left:682.3px;top:888.15px;font-size:14px;color:#15121e;"><span>0</span></div>
<div class="a" style="left:708px;top:888.5px;width:18px;height:11px;background:#ececec;border:1px solid #c4c4c4;box-sizing:border-box;"></div>
<div class="a" style="left:708px;top:900.5px;width:18px;height:11px;background:#ececec;border:1px solid #c4c4c4;box-sizing:border-box;"></div>
<svg class="a" style="left:713px;top:891.5px;" width="8" height="5" viewBox="0 0 8 5"><path d="M0 5 H8 L4 0.5 Z" fill="#111"/></svg>
<svg class="a" style="left:713px;top:903.5px;" width="8" height="5" viewBox="0 0 8 5"><path d="M0 0 H8 L4 4.5 Z" fill="#111"/></svg>
<div class="t" style="left:738px;top:888.15px;font-size:14px;color:#15121e;"><span style="transform:scaleX(1.0194);transform-origin:0 50%;">min</span></div>
<div class="t" style="left:482.7px;top:940.55px;font-size:14px;color:#15121e;"><span style="transform:scaleX(1.0308);transform-origin:0 50%;">Note:</span></div>
<div class="a" style="left:481px;top:961.5px;width:518px;height:124px;background:#f9f9f9;border:1px solid #8d8d8d;box-sizing:border-box;"></div>
<div class="a" style="left:825px;top:1115.5px;width:81px;height:26px;background:#f6f6f6;border:1px solid #a6a6a6;box-sizing:border-box;box-shadow:inset 0 0 0 1px #dcdcdc, inset 0 0 0 2px #fafafa;"></div>
<div class="t" style="left:844.5px;top:1118.45px;font-size:14px;color:#15121e;"><span style="transform:scaleX(0.9634);transform-origin:0 50%;">Cancel</span></div>
<div class="a" style="left:916px;top:1115.5px;width:81px;height:26px;background:#f6f6f6;border:1px solid #a6a6a6;box-sizing:border-box;box-shadow:inset 0 0 0 1px #dcdcdc, inset 0 0 0 2px #fafafa;"></div>
<div class="t" style="left:946.5px;top:1118.45px;font-size:14px;color:#15121e;"><span style="transform:scaleX(0.9143);transform-origin:0 50%;">OK</span></div>
</section><footer class="taskbar">
<div class="a" style="left:0px;top:1390px;width:2564px;height:50px;background:linear-gradient(90deg,#272120 0%,#2b2321 20%,#262121 40%,#2f2622 56%,#252021 66%,#2a2322 80%,#2e2622 100%);"></div>
<div class="a" style="left:0px;top:1390px;width:4px;height:50px;background:#050505;"></div>
<svg class="a" style="left:23px;top:1404px;" width="22" height="22" viewBox="0 0 22 22"><path d="M0.5 3.9 L9.3 2.5 V10.3 H0.5 Z M10.6 2.3 L21 0.6 V10.3 H10.6 Z M0.5 11.6 H9.3 V19.5 L0.5 18.1 Z M10.6 11.6 H21 V21.4 L10.6 19.7 Z" fill="#fff"/></svg>
<svg class="a" style="left:82px;top:1404px;" width="24" height="22" viewBox="0 0 24 22"><path d="M2.6 0.5 V3.6 H14.6 V0.5 M2.6 20.5 V17.4 H14.6 V20.5" stroke="#fff" stroke-width="1.5" fill="none"/><rect x="2.6" y="6.6" width="12" height="7.8" stroke="#fff" stroke-width="1.5" fill="none"/><path d="M20 0.5 V5.5 M20 10.5 V20.5" stroke="#fff" stroke-width="1.5" fill="none"/><rect x="18.8" y="6" width="2.6" height="3.4" fill="#fff"/></svg>
<svg class="a" style="left:142px;top:1399px;" width="32" height="32" viewBox="0 0 32 32"><defs><linearGradient id="eg" x1="0" y1="0.2" x2="1" y2="0.8"><stop offset="0" stop-color="#1f9be6"/><stop offset=".5" stop-color="#1a7fd6"/><stop offset="1" stop-color="#1660b8"/></linearGradient><linearGradient id="eg2" x1="0" y1="0" x2="1" y2="0.4"><stop offset="0" stop-color="#2cb5e6"/><stop offset=".55" stop-color="#37c8b6"/><stop offset="1" stop-color="#62d24e"/></linearGradient></defs><circle cx="16" cy="16" r="15.2" fill="url(#eg)"/><path d="M1.6 11 A15.2 15.2 0 0 1 31 13.2 C31.6 19 27.5 21.6 21.8 20.6 C18.6 20 18.4 17.6 19.4 15.6 C20.6 13 17.8 9.6 13.4 10 C8 10.4 4.4 14 1.6 11 Z" fill="url(#eg2)"/><path d="M11 13.4 C7.4 17.4 9.2 27 21.6 27.6 C24.6 27.6 27 26.6 28.6 25 C24.6 31.6 14 33.4 7 27 C2.2 22.4 4.4 14.6 11 13.4 Z" fill="#134f9e"/><path d="M19.4 15.6 C18.4 17.6 18.6 20 21.8 20.6 C25.4 21.2 28.4 20.4 30 18.2 L32 18 L32 24 L28.6 25 C27 26.6 24.6 27.6 21.6 27.6 C15 27 13.6 21.6 15 18.4 C16 16.4 18 15.2 19.4 15.6 Z" fill="#262120"/></svg>
<svg class="a" style="left:205px;top:1398px;" width="31" height="33" viewBox="0 0 31 33"><defs><radialGradient id="fg" cx=".72" cy=".18" r=".95"><stop offset="0" stop-color="#fff36a"/><stop offset=".3" stop-color="#ffb128"/><stop offset=".62" stop-color="#ff4d2e"/><stop offset="1" stop-color="#e01b6a"/></radialGradient></defs><path d="M15.5 6 C17.5 4 18.5 1.2 18.5 0.6 C22 3.6 24 6.6 24.6 8.2 C25.4 7.6 25.6 6.6 25.6 6.6 C28.6 10 30.2 14 29.8 19 A14.4 14.4 0 1 1 2.6 11.6 C3 10.2 3.8 8.6 4.6 8 C4.6 9.4 5.2 10.4 5.2 10.4 C5.6 8 7 5.6 8.4 4.6 C8.4 6.6 10 8 11.6 8.4 C13 8.6 14.6 7.4 15.5 6 Z" fill="url(#fg)"/><circle cx="14.6" cy="18" r="6.6" fill="#8a3fe6"/><path d="M7.6 15.4 C10.6 12 17 12.4 19.6 15.2 C16 14.4 11.6 14.6 9.4 17.4 Z" fill="#ff9a30"/><path d="M8.6 20.6 C10.6 26 19 26.6 22 21 C20.6 27.6 10 29.6 6 22.6 Z" fill="#ff3a4a" opacity=".7"/></svg>
<svg class="a" style="left:266px;top:1399px;" width="32" height="32" viewBox="0 0 32 32"><circle cx="16" cy="16" r="14.5" fill="#fbc116"/><path d="M16 16 L3.45 8.75 A14.5 14.5 0 0 1 28.55 8.75 Z" fill="#e33b2e"/><path d="M16 16 L3.45 8.75 A14.5 14.5 0 0 0 16 30.5 L22.3 19.6 Z" fill="#2da94f"/><path d="M16 8.75 H28.55 A14.5 14.5 0 0 1 16 30.5 L22.3 19.6 Z" fill="#fbc116"/><circle cx="16" cy="16" r="6.8" fill="#fff"/><circle cx="16" cy="16" r="5.3" fill="#3f87f0"/></svg>
<svg class="a" style="left:329px;top:1402px;" width="30" height="26" viewBox="0 0 30 26"><path d="M1 3 H11 L13.5 5.5 H28 V22 H1 Z" fill="#f2b82a"/><path d="M1 8 H28 V22 H1 Z" fill="#ffd766"/><path d="M6 14 H23 V23 H18.5 V19 H10.5 V23 H6 Z" fill="#2b86d8"/></svg>
<div class="a" style="left:319px;top:1437px;width:51px;height:3px;background:#79b8ea;"></div>
<svg class="a" style="left:393px;top:1405.5px;" width="26" height="18.5" viewBox="0 0 30 22"><rect x="0.8" y="0.8" width="28" height="20" fill="#5fb6f0" stroke="#1d62b8" stroke-width="1.6"/><circle cx="9" cy="9" r="4.5" fill="#ffd25a"/><path d="M9 9 V4.5 A4.5 4.5 0 0 1 13.5 9 Z" fill="#2d6fd0"/><path d="M17 5 H26 M17 9 H26 M17 13 H26 M4 17 H14" stroke="#e8f4ff" stroke-width="1.6"/></svg>
<div class="a" style="left:453px;top:1400px;width:30px;height:30px;background:#1296dc;"></div>
<svg class="a" style="left:458px;top:1405px;" width="20" height="20" viewBox="0 0 20 20"><rect x="5" y="2.5" width="8" height="4" fill="none" stroke="#fff" stroke-width="1.2"/><rect x="2.5" y="6.5" width="13" height="8" rx="1" fill="none" stroke="#fff" stroke-width="1.2"/><rect x="9" y="9" width="8.5" height="9" fill="#1296dc" stroke="#fff" stroke-width="1.2"/><path d="M11 12 H15.5 M11 14.5 H15.5" stroke="#fff" stroke-width="1"/></svg>
<svg class="a" style="left:514px;top:1401px;" width="32" height="28" viewBox="0 0 32 28"><path d="M9 2 L29 7 V22 L9 15 Z" fill="#48a4e8"/><path d="M9 2 L29 7 V9 L9 4 Z" fill="#8cc8f4"/><path d="M2 21 L14 19 L22 24 L9 27 Z" fill="#e9e9ee"/><path d="M14 17 L19 19 L17 21 L13 19.5 Z" fill="#c9c9d0"/></svg>
<svg class="a" style="left:577px;top:1400px;" width="29" height="29" viewBox="0 0 29 29"><defs><linearGradient id="gg" x1="0" y1="0" x2="0.6" y2="1"><stop offset="0" stop-color="#eef3dc"/><stop offset=".45" stop-color="#dbe7b4"/><stop offset=".78" stop-color="#93c256"/><stop offset="1" stop-color="#4a9030"/></linearGradient></defs><rect width="29" height="29" fill="url(#gg)"/><path d="M6 1 L12 17 L17 3" stroke="#f8fbe8" stroke-width="3" fill="none" opacity=".45"/><rect x="0.5" y="0.5" width="28" height="28" fill="none" stroke="#7d8a60" stroke-width="1" opacity=".6"/></svg>
<div class="t" style="left:592.91px;top:1410.82px;font-size:19px;color:#fbfbf2;font-weight:700;"><span>4</span></div>
<div class="a" style="left:567px;top:1437px;width:51px;height:3px;background:#79b8ea;"></div>
<div class="a" style="left:624px;top:1390px;width:57px;height:50px;background:#434142;"></div>
<div class="a" style="left:681px;top:1390px;width:4px;height:50px;background:#4e4c4d;"></div>
<svg class="a" style="left:638px;top:1399px;" width="32" height="32" viewBox="0 0 32 32"><circle cx="16" cy="16" r="13.4" fill="none" stroke="#bf343a" stroke-width="3.2"/><path d="M15 17 L20.6 9.6 M15 17 L19.4 21.4" stroke="#d8474c" stroke-width="1.5" fill="none"/><path d="M16 3 V6.4 M16 25.6 V29 M3 16 H6.4 M25.6 16 H29" stroke="#8e2227" stroke-width="1.4"/></svg>
<div class="a" style="left:624px;top:1437px;width:61px;height:3px;background:#79b8ea;"></div>
<div class="a" style="left:701px;top:1400px;width:29px;height:29px;background:#0a1c3c;border-radius:4px;"></div>
<div class="t" style="left:704.9px;top:1405.31px;font-size:17px;color:#35a9ff;font-weight:700;"><span>Ps</span></div>
<div class="a" style="left:691px;top:1437px;width:51px;height:3px;background:#79b8ea;"></div>
<svg class="a" style="left:2448px;top:1403px;" width="24" height="24" viewBox="0 0 24 24"><path d="M15.7 2.4 A2 2 0 0 1 19.3 4.2 L11.75 19.2 L8.3 21.6 L8.2 17.4 Z" fill="none" stroke="#fff" stroke-width="1.3" stroke-linejoin="round"/><path d="M14.2 5.6 L17.6 7.4" stroke="#fff" stroke-width="1" fill="none"/><path d="M7.9 12.9 C4.2 12.5 1.6 15.4 2.4 18.4 C3 20.8 5.4 21.9 7.4 21.1 M17.6 8.6 C20.5 8 22.6 9.6 22 11.4 C21.6 12.8 20 13.6 18.4 13.2" fill="none" stroke="#fff" stroke-width="1.4"/></svg>
<div class="t" style="left:2495.9px;top:1393.8px;font-size:15px;color:#fff;"><span style="transform:scaleX(0.9163);transform-origin:0 50%;">6:32 PM</span></div>
<div class="t" style="left:2492.7px;top:1417.1px;font-size:15px;color:#fff;"><span style="transform:scaleX(1.0070);transform-origin:0 50%;">5/2/2022</span></div>
</footer>
</body></html>
